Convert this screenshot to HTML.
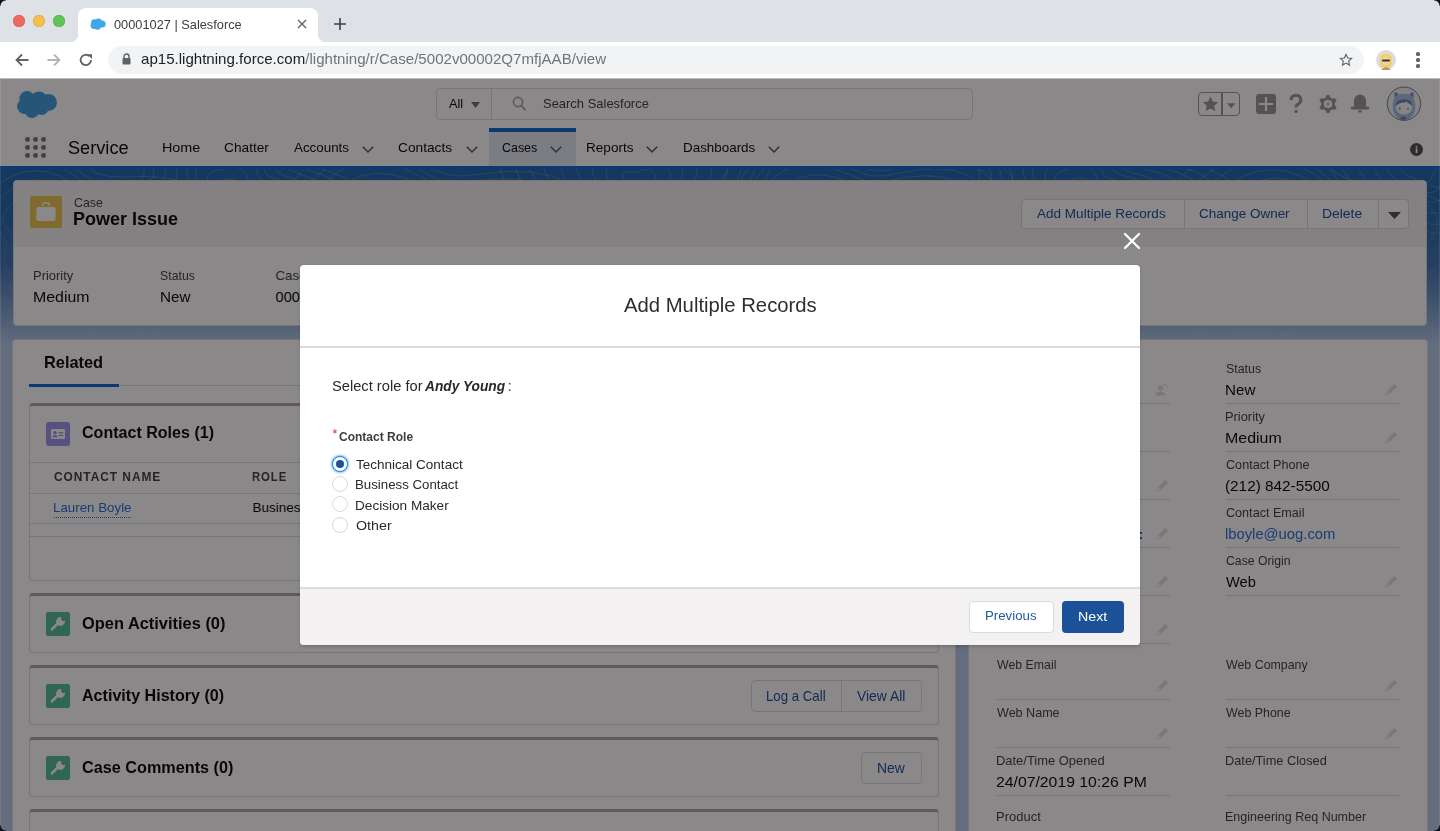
<!DOCTYPE html>
<html><head><meta charset="utf-8"><style>
*{box-sizing:border-box;margin:0;padding:0}
html,body{width:1440px;height:831px;overflow:hidden;background:#fff;font-family:"Liberation Sans",sans-serif;color:#080707}
.t{position:absolute;white-space:nowrap;line-height:1}
.r{position:absolute}
svg{position:absolute;overflow:visible}
</style></head><body>
<div class="r" style="left:0px;top:0px;width:1440px;height:42px;background:#dee1e6"></div>
<div class="r" style="left:0px;top:42px;width:1440px;height:36px;background:#fff"></div>
<div class="r" style="left:13px;top:15px;width:12px;height:12px;border-radius:50%;background:#ed6a5e;box-shadow:inset 0 0 0 0.5px #d5554b"></div>
<div class="r" style="left:33px;top:15px;width:12px;height:12px;border-radius:50%;background:#f5bf4f;box-shadow:inset 0 0 0 0.5px #d9a23a"></div>
<div class="r" style="left:53px;top:15px;width:12px;height:12px;border-radius:50%;background:#61c554;box-shadow:inset 0 0 0 0.5px #50a843"></div>
<div class="r" style="left:78px;top:8px;width:240px;height:34px;background:#fff;border-radius:8px 8px 0 0"></div>
<div class="r" style="left:70px;top:34px;width:8px;height:8px;background:radial-gradient(circle at 0 0,#dee1e6 8px,#fff 8.5px)"></div>
<div class="r" style="left:318px;top:34px;width:8px;height:8px;background:radial-gradient(circle at 100% 0,#dee1e6 8px,#fff 8.5px)"></div>
<svg style="left:90px;top:18px" width="16" height="12" viewBox="0 0 16 12"><g fill="#3fa6ea"><circle cx="4.5" cy="4.5" r="3.3"/><circle cx="8.5" cy="4" r="3.5"/><circle cx="12" cy="6" r="3.6"/><circle cx="4" cy="7.5" r="3.4"/><circle cx="7.5" cy="8.5" r="3.3"/></g></svg>
<div class="t" style="left:113.79px;top:17.91px;font-size:13.2px;color:#3c4043;transform:scaleX(0.9691);transform-origin:0 0;">00001027 | Salesforce</div>
<svg style="left:297px;top:19px" width="10" height="10" viewBox="0 0 10 10"><path d="M1 1L9 9M9 1L1 9" stroke="#5f6368" stroke-width="1.4"/></svg>
<svg style="left:334px;top:18px" width="12" height="12" viewBox="0 0 12 12"><path d="M6 0V12M0 6H12" stroke="#3c4043" stroke-width="1.6"/></svg>
<svg style="left:15px;top:53px" width="14" height="14" viewBox="0 0 14 14"><path d="M13.5 7H1.5M7 1.5L1.5 7L7 12.5" fill="none" stroke="#5f6368" stroke-width="1.8"/></svg>
<svg style="left:47px;top:53px" width="14" height="14" viewBox="0 0 14 14"><path d="M0.5 7H12.5M7 1.5L12.5 7L7 12.5" fill="none" stroke="#b4b6b9" stroke-width="1.8"/></svg>
<svg style="left:79px;top:53px" width="14" height="14" viewBox="0 0 14 14"><path d="M12 7A5.2 5.2 0 1 1 10.4 3.2" fill="none" stroke="#5f6368" stroke-width="1.8"/><path d="M8.2 1.2H13V6Z" fill="#5f6368"/></svg>
<div class="r" style="left:108px;top:46px;width:1256px;height:28px;background:#f1f3f4;border-radius:14px"></div>
<svg style="left:122px;top:53px" width="9" height="12" viewBox="0 0 9 12"><path d="M2 5V3.5A2.5 2.5 0 0 1 7 3.5V5" fill="none" stroke="#5f6368" stroke-width="1.4"/><rect x="0.5" y="5" width="8" height="6.5" rx="1" fill="#5f6368"/></svg>
<div class="t" style="left:141.40px;top:51.99px;font-size:14.6px;color:#202124;transform:scaleX(1.0329);transform-origin:0 0;">ap15.lightning.force.com<span style="color:#70757a">/lightning/r/Case/5002v00002Q7mfjAAB/view</span></div>
<svg style="left:1339px;top:53px" width="14" height="14" viewBox="0 0 24 24"><path d="M12 2.5l2.9 6.1 6.6.8-4.9 4.6 1.3 6.6L12 17.3l-5.9 3.3 1.3-6.6-4.9-4.6 6.6-.8z" fill="none" stroke="#5f6368" stroke-width="2"/></svg>
<div class="r" style="left:1376px;top:50px;width:20px;height:20px;border-radius:50%;background:#dcdcdc"></div>
<svg style="left:1376px;top:50px" width="20" height="20" viewBox="0 0 20 20"><path d="M4 12Q3 4 10 3.5Q17 4 16 12L15 17H5Z" fill="#f0d060"/><ellipse cx="10" cy="11" rx="4" ry="4.6" fill="#f0d2b0"/><rect x="6" y="9.5" width="8" height="2" rx="1" fill="#333"/><path d="M5 20Q10 14 15 20Z" fill="#c98f6a"/></svg>
<div class="r" style="left:1416.4px;top:52.4px;width:3.2px;height:3.2px;border-radius:50%;background:#5f6368"></div>
<div class="r" style="left:1416.4px;top:58.4px;width:3.2px;height:3.2px;border-radius:50%;background:#5f6368"></div>
<div class="r" style="left:1416.4px;top:64.4px;width:3.2px;height:3.2px;border-radius:50%;background:#5f6368"></div>
<div class="r" style="left:0;top:78px;width:1440px;height:753px;overflow:hidden;background:#b4cbe8">
<div class="r" style="left:0px;top:88px;width:1440px;height:665px;background:linear-gradient(#2266ac 0px,#2266ac 40px,#3f74b4 100px,#86a8d3 150px,#b4cbe8 178px,#b4cbe8 665px)"></div>
<svg style="left:0;top:91px" width="1440" height="200" viewBox="0 0 1440 200"><defs><linearGradient id="bf" x1="0" y1="0" x2="0" y2="1"><stop offset="0" stop-color="#fff" stop-opacity="1"/><stop offset="0.85" stop-color="#fff" stop-opacity="0.3"/><stop offset="1" stop-color="#fff" stop-opacity="0"/></linearGradient><mask id="bm"><rect width="1440" height="200" fill="url(#bf)"/></mask></defs><g mask="url(#bm)" fill="none" stroke="#ffffff" stroke-opacity="0.18" stroke-width="1"><path d="M76.6,60.0L75.5,61.3L74.4,62.4L73.3,63.4L72.3,64.4L71.1,65.2L69.6,65.9L68.0,66.4L66.4,66.8L64.8,67.1L63.3,67.6L61.8,68.3L60.0,69.2L57.8,70.1L55.4,70.6L52.9,70.6L50.7,69.9L49.3,68.6L48.7,67.0L48.7,65.3L48.9,63.9L49.0,62.8L48.6,61.9L47.8,61.0L46.8,60.0L46.0,58.9L45.6,57.6L45.8,56.4L46.5,55.2L47.4,54.1L48.6,53.0L49.9,51.9L51.5,50.9L53.4,50.2L55.6,49.9L57.9,50.2L60.0,50.9L61.7,51.9L63.1,52.9L64.3,53.7L65.6,54.0L67.4,54.0L69.7,54.0L72.3,54.2L74.7,54.8L76.5,55.8L77.4,57.1L77.3,58.6L76.6,60.0Z M94.7,60.0L92.4,62.6L90.1,65.0L87.9,67.1L85.7,69.1L83.1,70.9L80.1,72.4L76.8,73.5L73.3,74.2L70.0,74.9L66.9,75.9L63.7,77.4L60.0,79.3L55.5,81.1L50.3,82.2L45.1,82.2L40.6,80.7L37.6,78.0L36.3,74.6L36.3,71.2L36.9,68.2L37.0,65.9L36.2,63.9L34.5,62.1L32.4,60.0L30.7,57.6L30.0,55.0L30.4,52.4L31.7,50.0L33.7,47.6L36.1,45.3L38.9,43.1L42.2,41.0L46.2,39.5L50.8,38.9L55.6,39.4L60.0,41.0L63.6,43.1L66.4,45.2L68.9,46.8L71.7,47.5L75.5,47.6L80.4,47.5L85.8,47.8L90.8,49.1L94.5,51.2L96.3,54.0L96.2,57.1L94.7,60.0Z M108.1,60.0L105.0,63.6L101.8,66.9L98.7,69.9L95.6,72.6L92.1,75.2L87.9,77.2L83.3,78.7L78.5,79.7L73.9,80.7L69.6,82.1L65.2,84.2L60.0,86.7L53.7,89.3L46.6,90.9L39.3,90.8L33.1,88.7L29.0,84.9L27.2,80.2L27.2,75.5L27.9,71.4L28.1,68.1L27.0,65.4L24.6,62.9L21.7,60.0L19.4,56.7L18.3,53.1L18.9,49.5L20.8,46.1L23.6,42.8L26.9,39.6L30.7,36.5L35.3,33.7L40.9,31.6L47.3,30.7L53.9,31.5L60.0,33.6L65.0,36.6L68.9,39.5L72.4,41.6L76.3,42.6L81.5,42.7L88.2,42.6L95.7,43.1L102.7,44.8L107.9,47.8L110.4,51.7L110.2,55.9L108.1,60.0Z M126.0,60.0L121.8,65.0L117.4,69.5L113.1,73.5L108.9,77.4L104.1,80.8L98.4,83.6L92.0,85.6L85.4,87.1L79.1,88.4L73.2,90.3L67.1,93.2L60.0,96.7L51.4,100.2L41.6,102.4L31.6,102.2L23.1,99.4L17.4,94.2L14.9,87.7L15.0,81.3L15.9,75.7L16.2,71.2L14.6,67.5L11.4,63.9L7.4,60.0L4.2,55.5L2.8,50.6L3.6,45.6L6.2,40.9L10.0,36.4L14.5,32.0L19.8,27.7L26.1,23.9L33.7,21.0L42.5,19.8L51.6,20.8L60.0,23.8L66.9,27.8L72.2,31.9L77.0,34.8L82.4,36.2L89.6,36.3L98.8,36.1L109.0,36.8L118.6,39.2L125.7,43.2L129.2,48.6L128.9,54.4L126.0,60.0Z M141.2,60.0L136.0,66.2L130.5,71.6L125.4,76.7L120.1,81.4L114.2,85.6L107.2,89.0L99.3,91.5L91.2,93.3L83.5,94.9L76.2,97.3L68.7,100.8L60.0,105.2L49.4,109.4L37.3,112.1L25.0,111.9L14.6,108.4L7.6,102.1L4.5,94.1L4.6,86.2L5.8,79.3L6.1,73.7L4.2,69.2L0.2,64.8L-4.7,60.0L-8.6,54.4L-10.3,48.4L-9.4,42.3L-6.2,36.5L-1.5,31.0L4.1,25.6L10.5,20.3L18.3,15.5L27.7,12.0L38.5,10.6L49.7,11.8L60.0,15.4L68.5,20.4L75.1,25.4L80.9,29.0L87.5,30.7L96.4,30.8L107.7,30.7L120.3,31.5L132.1,34.4L140.8,39.4L145.1,46.0L144.8,53.1L141.2,60.0Z M155.8,60.0L149.6,67.3L143.2,73.7L137.1,79.7L130.9,85.2L123.9,90.2L115.7,94.3L106.4,97.2L96.8,99.3L87.7,101.2L79.2,104.0L70.3,108.1L60.0,113.3L47.5,118.3L33.2,121.5L18.8,121.3L6.4,117.1L-1.9,109.6L-5.4,100.3L-5.4,90.9L-3.9,82.7L-3.6,76.2L-5.8,70.9L-10.6,65.7L-16.3,60.0L-20.9,53.4L-23.0,46.3L-21.9,39.1L-18.1,32.3L-12.6,25.7L-6.0,19.4L1.6,13.2L10.8,7.6L21.9,3.4L34.6,1.7L47.8,3.1L60.0,7.4L70.0,13.3L77.8,19.2L84.6,23.4L92.4,25.4L102.9,25.6L116.2,25.4L131.1,26.4L145.1,29.8L155.4,35.7L160.4,43.5L160.0,51.9L155.8,60.0Z M173.7,60.0L166.4,68.6L158.7,76.3L151.5,83.3L144.2,89.9L135.9,95.8L126.1,100.6L115.0,104.1L103.7,106.6L92.9,108.9L82.7,112.2L72.2,117.1L60.0,123.2L45.2,129.2L28.2,132.9L11.1,132.7L-3.6,127.8L-13.4,118.9L-17.6,107.8L-17.6,96.6L-15.9,87.0L-15.5,79.2L-18.1,72.9L-23.7,66.8L-30.5,60.0L-36.0,52.2L-38.5,43.8L-37.1,35.2L-32.6,27.1L-26.1,19.3L-18.3,11.8L-9.3,4.5L1.6,-2.2L14.8,-7.2L29.9,-9.2L45.6,-7.5L60.0,-2.4L71.8,4.6L81.1,11.6L89.2,16.6L98.5,19.0L110.9,19.2L126.7,18.9L144.4,20.1L160.9,24.1L173.1,31.2L179.1,40.4L178.7,50.4L173.7,60.0Z M187.5,60.0L179.4,69.7L170.8,78.3L162.7,86.2L154.4,93.6L145.1,100.2L134.1,105.6L121.7,109.5L109.0,112.3L96.9,114.9L85.5,118.6L73.7,124.1L60.0,131.0L43.4,137.6L24.4,141.8L5.1,141.6L-11.3,136.0L-22.4,126.1L-27.1,113.6L-27.0,101.1L-25.1,90.2L-24.7,81.6L-27.7,74.5L-33.9,67.6L-41.5,60.0L-47.8,51.3L-50.5,41.8L-49.0,32.2L-44.0,23.1L-36.6,14.4L-27.9,5.9L-17.7,-2.3L-5.5,-9.8L9.3,-15.4L26.2,-17.6L43.8,-15.7L60.0,-10.0L73.3,-2.1L83.7,5.7L92.8,11.3L103.2,14.0L117.1,14.2L134.9,13.9L154.7,15.3L173.3,19.8L187.0,27.6L193.6,38.0L193.2,49.2L187.5,60.0Z M205.2,60.0L195.9,71.0L186.1,80.8L176.9,89.8L167.5,98.2L156.9,105.8L144.4,111.9L130.3,116.4L115.8,119.5L102.0,122.5L89.0,126.7L75.6,132.9L60.0,140.8L41.1,148.4L19.4,153.2L-2.5,152.9L-21.2,146.6L-33.8,135.2L-39.2,121.0L-39.1,106.8L-36.9,94.4L-36.4,84.6L-39.8,76.5L-46.9,68.7L-55.6,60.0L-62.7,50.1L-65.8,39.3L-64.1,28.4L-58.3,18.0L-50.0,8.1L-40.0,-1.6L-28.5,-11.0L-14.6,-19.5L2.2,-25.8L21.5,-28.3L41.6,-26.2L60.0,-19.7L75.1,-10.7L86.9,-1.9L97.3,4.6L109.2,7.6L125.0,7.9L145.2,7.5L167.8,9.1L188.9,14.2L204.5,23.2L212.1,34.9L211.6,47.7L205.2,60.0Z M246.6,20.0L247.6,21.4L247.5,22.9L246.3,24.2L244.5,25.1L242.3,25.8L240.2,26.3L238.3,26.7L236.7,27.1L235.1,27.5L233.4,27.9L231.7,28.0L230.0,28.0L228.3,27.9L226.6,27.8L224.8,27.7L222.7,27.8L220.3,27.8L217.9,27.5L215.7,26.8L214.2,25.6L213.8,24.1L214.4,22.6L215.8,21.2L217.3,20.0L218.5,19.1L219.2,18.2L219.3,17.3L219.1,16.1L219.0,14.8L219.5,13.5L220.5,12.4L222.0,11.5L223.9,10.9L225.8,10.4L227.9,10.2L230.0,10.0L232.1,10.0L234.2,10.3L236.0,11.1L237.3,12.2L238.2,13.5L238.6,14.7L238.9,15.8L239.6,16.6L240.9,17.2L242.7,17.9L244.8,18.8L246.6,20.0Z M264.3,20.0L266.3,22.9L266.1,26.0L263.7,28.6L259.9,30.6L255.4,32.0L251.1,33.0L247.2,33.8L243.8,34.7L240.5,35.5L237.1,36.2L233.5,36.6L230.0,36.6L226.5,36.3L223.0,36.0L219.2,36.0L214.9,36.1L210.0,36.0L204.9,35.4L200.4,34.0L197.4,31.6L196.6,28.5L197.8,25.3L200.6,22.4L203.8,20.0L206.3,18.1L207.6,16.3L207.8,14.3L207.5,12.0L207.4,9.3L208.3,6.6L210.4,4.3L213.5,2.4L217.3,1.1L221.4,0.3L225.7,-0.3L230.0,-0.7L234.4,-0.6L238.7,0.1L242.4,1.6L245.2,3.8L246.8,6.5L247.7,9.1L248.4,11.3L249.8,12.9L252.5,14.3L256.3,15.7L260.6,17.5L264.3,20.0Z M282.2,20.0L285.3,24.5L285.0,29.1L281.4,33.1L275.5,36.2L268.7,38.3L262.1,39.8L256.2,41.0L251.0,42.4L246.0,43.7L240.8,44.8L235.4,45.3L230.0,45.2L224.7,44.8L219.4,44.5L213.6,44.4L207.0,44.5L199.5,44.4L191.8,43.5L184.9,41.3L180.4,37.6L179.0,33.0L181.0,28.1L185.2,23.6L190.0,20.0L193.9,17.1L195.9,14.4L196.2,11.4L195.6,7.8L195.5,3.7L196.9,-0.4L200.1,-4.0L204.9,-6.8L210.7,-8.7L216.9,-10.1L223.4,-11.0L230.0,-11.5L236.7,-11.5L243.2,-10.4L248.9,-8.1L253.1,-4.7L255.7,-0.6L257.0,3.4L258.1,6.7L260.3,9.3L264.3,11.3L270.1,13.4L276.6,16.2L282.2,20.0Z M295.3,20.0L299.2,25.6L298.8,31.3L294.3,36.4L286.9,40.2L278.4,42.9L270.2,44.7L262.8,46.3L256.3,48.0L250.0,49.6L243.5,51.0L236.8,51.6L230.0,51.6L223.4,51.1L216.7,50.6L209.5,50.5L201.2,50.7L191.9,50.6L182.2,49.4L173.6,46.6L167.9,42.1L166.3,36.2L168.7,30.1L173.9,24.5L180.0,20.0L184.8,16.3L187.4,13.0L187.7,9.2L187.0,4.7L186.9,-0.4L188.6,-5.5L192.6,-10.0L198.6,-13.5L205.8,-15.9L213.6,-17.6L221.7,-18.8L230.0,-19.4L238.4,-19.3L246.5,-18.0L253.6,-15.1L258.9,-10.8L262.1,-5.8L263.8,-0.8L265.1,3.4L267.8,6.6L272.8,9.1L280.1,11.7L288.3,15.3L295.3,20.0Z M312.0,20.0L316.8,27.0L316.3,34.2L310.7,40.6L301.4,45.4L290.7,48.7L280.4,51.0L271.2,53.0L262.9,55.1L255.0,57.2L246.9,58.9L238.5,59.7L230.0,59.6L221.7,59.0L213.3,58.4L204.3,58.2L193.9,58.5L182.2,58.3L170.0,56.9L159.3,53.4L152.1,47.7L150.0,40.4L153.1,32.7L159.6,25.7L167.2,20.0L173.3,15.4L176.5,11.2L177.0,6.5L176.1,0.8L175.9,-5.5L178.0,-12.0L183.1,-17.6L190.6,-22.0L199.6,-25.1L209.5,-27.2L219.6,-28.6L230.0,-29.5L240.6,-29.3L250.8,-27.7L259.7,-24.1L266.3,-18.7L270.3,-12.3L272.4,-6.1L274.1,-0.8L277.5,3.1L283.8,6.3L292.9,9.6L303.1,14.1L312.0,20.0Z M330.0,20.0L335.9,28.6L335.3,37.4L328.4,45.1L317.1,50.9L304.1,55.0L291.4,57.8L280.2,60.3L270.2,62.8L260.5,65.3L250.6,67.4L240.4,68.4L230.0,68.3L219.8,67.5L209.6,66.8L198.6,66.6L186.0,66.9L171.7,66.8L156.8,65.0L143.8,60.7L135.0,53.7L132.5,44.9L136.2,35.5L144.2,27.0L153.5,20.0L160.9,14.4L164.8,9.2L165.3,3.5L164.2,-3.4L164.0,-11.1L166.6,-19.0L172.8,-25.9L181.9,-31.3L193.0,-35.0L204.9,-37.5L217.3,-39.3L230.0,-40.3L242.9,-40.2L255.3,-38.1L266.2,-33.7L274.2,-27.2L279.1,-19.4L281.6,-11.8L283.8,-5.4L287.9,-0.6L295.5,3.3L306.7,7.4L319.2,12.8L330.0,20.0Z M347.6,20.0L354.6,30.1L353.8,40.4L345.7,49.5L332.4,56.4L317.1,61.1L302.3,64.5L289.0,67.4L277.2,70.3L265.9,73.3L254.3,75.7L242.2,76.9L230.0,76.8L218.0,75.9L206.0,75.0L193.1,74.8L178.2,75.2L161.4,75.0L144.0,72.9L128.6,67.9L118.3,59.7L115.3,49.2L119.6,38.2L129.1,28.2L140.0,20.0L148.7,13.4L153.3,7.4L153.9,0.6L152.7,-7.5L152.4,-16.6L155.5,-25.9L162.7,-34.0L173.4,-40.3L186.5,-44.7L200.5,-47.7L215.1,-49.7L230.0,-51.0L245.1,-50.8L259.8,-48.4L272.5,-43.2L282.0,-35.5L287.8,-26.4L290.7,-17.4L293.2,-9.9L298.1,-4.2L307.1,0.3L320.2,5.1L334.9,11.5L347.6,20.0Z M362.1,20.0L370.0,31.3L369.2,42.9L360.0,53.1L345.1,60.9L327.9,66.2L311.2,70.0L296.4,73.2L283.1,76.6L270.3,79.9L257.3,82.6L243.7,84.0L230.0,83.8L216.6,82.8L203.1,81.8L188.5,81.6L171.8,82.0L152.9,81.8L133.3,79.5L116.0,73.8L104.5,64.6L101.1,52.9L106.0,40.5L116.6,29.2L128.8,20.0L138.7,12.6L143.8,5.8L144.5,-1.8L143.1,-10.9L142.8,-21.2L146.2,-31.5L154.3,-40.7L166.4,-47.8L181.1,-52.7L196.9,-56.0L213.2,-58.4L230.0,-59.7L247.0,-59.5L263.5,-56.8L277.8,-51.0L288.5,-42.3L295.0,-32.1L298.3,-22.0L301.1,-13.6L306.5,-7.2L316.6,-2.1L331.3,3.3L347.9,10.4L362.1,20.0Z M438.9,70.0L438.0,71.5L437.1,72.8L436.1,74.1L434.8,75.2L433.1,76.2L431.2,76.9L429.3,77.4L427.5,78.0L426.0,78.9L424.3,80.0L422.4,81.3L420.0,82.6L417.1,83.5L414.1,83.5L411.4,82.7L409.5,81.2L408.4,79.3L408.0,77.4L407.8,75.7L407.4,74.5L406.5,73.4L405.2,72.4L403.8,71.3L402.7,70.0L402.1,68.6L402.1,67.1L402.6,65.6L403.4,64.1L404.4,62.6L405.6,61.1L407.2,59.8L409.4,58.7L412.1,58.3L415.0,58.5L417.7,59.3L420.0,60.4L421.8,61.4L423.5,62.0L425.3,62.1L427.6,61.9L430.5,61.6L433.6,61.6L436.6,62.2L438.8,63.3L440.0,64.9L440.2,66.7L439.7,68.4L438.9,70.0Z M450.1,70.0L448.6,72.3L447.2,74.5L445.6,76.5L443.5,78.3L440.8,79.8L437.8,80.9L434.8,81.8L432.0,82.8L429.5,84.1L426.9,85.9L423.9,88.0L420.0,90.1L415.4,91.4L410.6,91.5L406.4,90.2L403.3,87.8L401.6,84.8L400.9,81.7L400.6,79.1L400.0,77.1L398.6,75.5L396.5,73.9L394.3,72.1L392.5,70.0L391.6,67.7L391.6,65.3L392.4,63.0L393.6,60.6L395.1,58.3L397.1,55.9L399.7,53.7L403.2,52.1L407.4,51.3L412.0,51.7L416.3,52.9L420.0,54.7L422.9,56.3L425.5,57.3L428.4,57.5L432.1,57.1L436.6,56.7L441.6,56.7L446.3,57.6L449.9,59.4L451.8,61.9L452.1,64.7L451.4,67.5L450.1,70.0Z M468.3,70.0L466.0,73.7L463.7,77.2L461.1,80.5L457.7,83.4L453.4,85.8L448.6,87.6L443.7,89.0L439.3,90.5L435.2,92.6L431.1,95.5L426.2,99.0L420.0,102.3L412.6,104.4L404.9,104.6L398.1,102.5L393.2,98.6L390.4,93.7L389.4,88.8L388.9,84.7L387.9,81.4L385.6,78.8L382.3,76.2L378.7,73.3L375.8,70.0L374.3,66.3L374.4,62.5L375.6,58.7L377.6,54.9L380.0,51.1L383.2,47.3L387.4,43.9L393.0,41.2L399.8,40.0L407.2,40.5L414.1,42.6L420.0,45.4L424.7,48.0L428.9,49.6L433.5,49.9L439.4,49.3L446.7,48.6L454.8,48.6L462.3,50.0L468.0,53.0L471.1,57.0L471.6,61.5L470.4,65.9L468.3,70.0Z M480.9,70.0L478.1,74.7L475.1,79.1L471.8,83.2L467.5,86.9L462.1,89.9L456.0,92.2L449.9,94.0L444.3,95.9L439.2,98.5L434.0,102.2L427.8,106.6L420.0,110.7L410.7,113.4L401.0,113.6L392.4,111.0L386.1,106.1L382.7,99.9L381.4,93.8L380.8,88.5L379.5,84.4L376.6,81.1L372.4,77.8L367.9,74.2L364.3,70.0L362.4,65.3L362.5,60.5L364.0,55.7L366.5,51.0L369.6,46.2L373.6,41.4L378.9,37.0L386.0,33.7L394.5,32.2L403.8,32.8L412.6,35.4L420.0,38.9L425.9,42.2L431.2,44.3L437.0,44.7L444.5,43.9L453.7,43.0L463.9,43.0L473.3,44.8L480.5,48.5L484.4,53.6L485.1,59.3L483.5,64.9L480.9,70.0Z M495.3,70.0L491.7,75.8L488.1,81.2L484.0,86.3L478.7,90.9L472.1,94.6L464.5,97.4L456.9,99.6L450.0,102.0L443.7,105.2L437.3,109.8L429.7,115.2L420.0,120.3L408.5,123.6L396.5,123.9L385.9,120.7L378.2,114.6L373.9,107.0L372.3,99.4L371.6,92.9L369.9,87.8L366.4,83.7L361.2,79.7L355.6,75.2L351.1,70.0L348.8,64.2L348.9,58.3L350.8,52.4L353.9,46.5L357.7,40.6L362.6,34.7L369.2,29.3L377.9,25.2L388.6,23.3L400.0,24.1L410.8,27.2L420.0,31.6L427.3,35.7L433.8,38.2L441.0,38.7L450.2,37.8L461.6,36.6L474.2,36.7L485.9,38.9L494.7,43.4L499.6,49.7L500.4,56.7L498.5,63.6L495.3,70.0Z M510.1,70.0L505.8,77.0L501.5,83.4L496.6,89.5L490.3,95.0L482.3,99.4L473.3,102.8L464.2,105.5L455.9,108.3L448.4,112.2L440.7,117.6L431.6,124.1L420.0,130.2L406.3,134.2L391.9,134.5L379.2,130.7L369.9,123.4L364.8,114.2L362.9,105.2L362.0,97.4L360.1,91.3L355.8,86.4L349.6,81.6L342.9,76.2L337.6,70.0L334.8,63.1L334.9,56.0L337.2,48.9L340.9,41.9L345.5,34.8L351.3,27.7L359.2,21.2L369.6,16.3L382.4,14.1L396.1,15.0L409.0,18.8L420.0,24.0L428.8,28.9L436.6,32.0L445.2,32.6L456.2,31.4L469.9,30.0L484.9,30.1L498.9,32.8L509.5,38.2L515.2,45.7L516.3,54.1L514.0,62.4L510.1,70.0Z M525.8,70.0L520.8,78.2L515.8,85.8L510.0,92.9L502.5,99.3L493.2,104.6L482.6,108.5L471.9,111.6L462.2,114.9L453.3,119.5L444.3,125.9L433.6,133.5L420.0,140.7L403.9,145.4L387.0,145.8L372.0,141.2L361.2,132.7L355.2,122.0L352.9,111.3L351.9,102.2L349.6,95.0L344.7,89.2L337.4,83.6L329.5,77.3L323.2,70.0L319.9,61.9L320.1,53.5L322.8,45.2L327.1,37.0L332.5,28.7L339.3,20.4L348.6,12.7L360.9,7.0L375.8,4.3L391.9,5.5L407.1,9.9L420.0,16.0L430.3,21.8L439.5,25.3L449.6,26.1L462.5,24.7L478.5,23.0L496.2,23.1L512.6,26.3L525.1,32.7L531.8,41.5L533.1,51.4L530.4,61.1L525.8,70.0Z M542.8,70.0L537.0,79.5L531.2,88.3L524.4,96.6L515.8,104.0L505.0,110.1L492.7,114.7L480.3,118.3L468.9,122.2L458.7,127.5L448.2,134.9L435.8,143.7L420.0,152.1L401.3,157.5L381.7,157.9L364.3,152.7L351.8,142.7L344.8,130.3L342.1,117.9L340.9,107.3L338.3,99.0L332.5,92.3L324.1,85.8L315.0,78.5L307.6,70.0L303.9,60.6L304.0,50.9L307.2,41.2L312.1,31.7L318.4,22.0L326.4,12.4L337.1,3.5L351.4,-3.2L368.7,-6.2L387.4,-4.9L405.1,0.2L420.0,7.3L432.0,14.0L442.6,18.1L454.3,19.0L469.3,17.4L488.0,15.5L508.4,15.6L527.5,19.2L541.9,26.7L549.8,36.9L551.2,48.4L548.1,59.6L542.8,70.0Z M555.1,70.0L548.8,80.4L542.3,90.2L534.9,99.3L525.4,107.5L513.5,114.2L500.0,119.2L486.3,123.2L473.9,127.4L462.6,133.3L451.1,141.4L437.4,151.1L420.0,160.3L399.4,166.3L377.9,166.8L358.7,161.0L344.9,150.1L337.2,136.4L334.3,122.7L333.0,111.1L330.1,102.0L323.8,94.5L314.5,87.4L304.4,79.4L296.3,70.0L292.2,59.6L292.3,49.0L295.8,38.3L301.3,27.8L308.2,17.2L317.0,6.6L328.8,-3.2L344.5,-10.5L363.5,-13.9L384.1,-12.5L403.6,-6.8L420.0,1.0L433.2,8.4L444.8,12.9L457.8,13.9L474.3,12.1L494.8,10.0L517.3,10.1L538.3,14.1L554.2,22.3L562.9,33.6L564.4,46.2L561.0,58.6L555.1,70.0Z M571.7,70.0L564.6,81.7L557.3,92.6L549.0,102.9L538.4,112.1L525.0,119.6L509.8,125.2L494.5,129.7L480.5,134.5L467.8,141.0L454.9,150.1L439.5,161.0L420.0,171.4L396.9,178.1L372.7,178.6L351.2,172.2L335.7,159.9L327.1,144.5L323.8,129.2L322.3,116.1L319.1,105.9L312.0,97.5L301.5,89.5L290.2,80.5L281.2,70.0L276.5,58.4L276.7,46.4L280.6,34.5L286.8,22.7L294.5,10.7L304.3,-1.2L317.6,-12.1L335.2,-20.4L356.6,-24.2L379.7,-22.6L401.6,-16.2L420.0,-7.4L434.8,0.8L447.9,5.9L462.4,7.0L481.0,5.0L504.0,2.7L529.2,2.8L552.8,7.3L570.7,16.5L580.4,29.1L582.1,43.3L578.3,57.2L571.7,70.0Z M655.2,10.0L654.2,11.2L653.0,12.1L651.8,13.0L650.9,13.9L650.4,14.9L650.2,16.3L649.9,17.9L649.0,19.6L647.4,21.0L645.1,21.8L642.5,21.8L640.0,21.2L637.8,20.1L636.1,18.8L634.8,17.8L633.4,17.0L632.0,16.4L630.4,15.9L628.7,15.3L627.2,14.5L626.0,13.6L625.1,12.5L624.4,11.3L623.7,10.0L623.0,8.6L622.6,7.1L622.7,5.6L623.6,4.2L625.5,3.1L627.9,2.6L630.7,2.5L633.2,2.8L635.3,3.1L637.0,3.1L638.4,2.6L640.0,1.8L642.0,0.9L644.3,0.1L646.8,-0.1L649.2,0.2L651.2,1.1L652.6,2.2L653.7,3.5L654.5,4.8L655.1,6.1L655.6,7.4L655.6,8.7L655.2,10.0Z M669.6,10.0L667.8,12.3L665.4,14.2L663.0,15.9L661.3,17.6L660.4,19.6L659.9,22.3L659.2,25.4L657.5,28.7L654.4,31.4L650.0,33.0L644.9,33.1L640.0,31.8L635.8,29.7L632.5,27.3L629.8,25.2L627.2,23.6L624.4,22.6L621.2,21.6L618.0,20.4L615.1,18.9L612.7,16.9L611.0,14.8L609.5,12.5L608.2,10.0L606.9,7.3L606.0,4.4L606.3,1.4L608.1,-1.3L611.6,-3.4L616.5,-4.5L621.8,-4.6L626.8,-4.1L630.9,-3.5L634.1,-3.5L636.9,-4.4L640.0,-6.0L643.8,-7.9L648.4,-9.3L653.3,-9.8L657.9,-9.1L661.8,-7.5L664.6,-5.2L666.7,-2.6L668.3,-0.1L669.5,2.5L670.4,5.0L670.5,7.5L669.6,10.0Z M681.6,10.0L679.0,13.2L675.7,15.9L672.4,18.2L669.9,20.6L668.6,23.5L668.0,27.2L667.0,31.7L664.6,36.2L660.2,40.1L654.1,42.3L646.9,42.4L640.0,40.6L634.1,37.6L629.5,34.2L625.7,31.3L622.0,29.2L618.0,27.6L613.6,26.3L609.1,24.6L605.0,22.4L601.7,19.8L599.3,16.7L597.2,13.5L595.3,10.0L593.5,6.2L592.3,2.1L592.6,-2.1L595.2,-5.9L600.2,-8.8L607.0,-10.3L614.5,-10.5L621.5,-9.7L627.2,-9.0L631.7,-9.0L635.7,-10.2L640.0,-12.5L645.4,-15.1L651.8,-17.1L658.7,-17.8L665.2,-16.8L670.6,-14.5L674.6,-11.3L677.5,-7.7L679.7,-4.1L681.5,-0.6L682.6,3.0L682.8,6.5L681.6,10.0Z M695.4,10.0L691.9,14.2L687.5,17.8L683.1,21.0L679.8,24.2L678.1,28.0L677.2,32.9L675.9,38.8L672.8,44.9L666.9,50.0L658.7,53.0L649.2,53.2L640.0,50.8L632.1,46.7L626.0,42.3L620.9,38.4L616.1,35.5L610.8,33.5L604.8,31.6L598.8,29.4L593.4,26.6L589.1,23.0L585.8,18.9L583.1,14.6L580.5,10.0L578.1,5.0L576.5,-0.5L576.9,-6.1L580.4,-11.2L587.0,-15.0L596.0,-17.1L606.0,-17.3L615.3,-16.3L623.0,-15.3L629.0,-15.3L634.2,-16.9L640.0,-19.9L647.1,-23.4L655.7,-26.0L664.9,-26.9L673.5,-25.7L680.7,-22.6L686.1,-18.3L689.9,-13.6L692.9,-8.8L695.2,-4.1L696.7,0.6L697.0,5.4L695.4,10.0Z M709.7,10.0L705.4,15.3L699.7,19.9L694.2,23.8L690.1,27.8L688.0,32.6L686.9,38.9L685.2,46.3L681.3,54.0L673.9,60.4L663.6,64.1L651.6,64.3L640.0,61.3L630.1,56.2L622.3,50.6L616.0,45.7L609.9,42.1L603.2,39.5L595.7,37.2L588.1,34.5L581.3,30.8L575.9,26.3L571.8,21.3L568.3,15.8L565.1,10.0L562.0,3.7L560.1,-3.2L560.6,-10.2L564.9,-16.7L573.2,-21.5L584.6,-24.1L597.2,-24.3L609.0,-23.1L618.6,-21.8L626.1,-21.8L632.7,-23.9L640.0,-27.7L649.0,-32.0L659.7,-35.4L671.3,-36.5L682.2,-35.0L691.2,-31.1L698.0,-25.7L702.9,-19.7L706.6,-13.7L709.5,-7.7L711.4,-1.8L711.7,4.2L709.7,10.0Z M725.2,10.0L720.0,16.5L713.1,22.1L706.3,26.9L701.3,31.8L698.7,37.7L697.4,45.3L695.4,54.4L690.5,63.8L681.5,71.7L668.8,76.2L654.2,76.5L640.0,72.8L627.9,66.6L618.4,59.7L610.6,53.7L603.2,49.3L595.0,46.1L585.8,43.3L576.6,40.0L568.2,35.5L561.6,30.0L556.5,23.8L552.3,17.1L548.3,10.0L544.6,2.3L542.2,-6.1L542.9,-14.8L548.1,-22.6L558.3,-28.6L572.3,-31.7L587.7,-32.0L602.0,-30.5L613.8,-28.9L623.0,-29.0L631.1,-31.5L640.0,-36.1L651.0,-41.4L664.2,-45.5L678.3,-46.9L691.6,-45.0L702.7,-40.3L710.9,-33.7L716.9,-26.3L721.4,-18.9L725.0,-11.7L727.4,-4.4L727.7,2.9L725.2,10.0Z M738.1,10.0L732.0,17.5L724.1,23.9L716.3,29.5L710.6,35.1L707.5,41.9L706.0,50.6L703.7,61.1L698.1,71.9L687.7,80.9L673.2,86.2L656.4,86.5L640.0,82.2L626.1,75.1L615.1,67.1L606.2,60.3L597.6,55.2L588.2,51.6L577.7,48.3L567.0,44.5L557.4,39.3L549.8,33.0L543.9,25.8L539.1,18.2L534.5,10.0L530.3,1.1L527.5,-8.6L528.3,-18.5L534.3,-27.6L546.0,-34.4L562.1,-38.0L579.8,-38.3L596.3,-36.6L609.9,-34.8L620.5,-34.8L629.8,-37.7L640.0,-43.0L652.6,-49.1L667.8,-53.8L684.1,-55.5L699.4,-53.3L712.1,-47.8L721.6,-40.2L728.5,-31.8L733.7,-23.3L737.8,-14.9L740.5,-6.6L740.9,1.8L738.1,10.0Z M751.4,10.0L744.6,18.5L735.5,25.8L726.7,32.1L720.2,38.5L716.7,46.2L715.0,56.1L712.4,68.0L706.0,80.3L694.3,90.6L677.7,96.5L658.6,96.9L640.0,92.1L624.2,83.9L611.7,74.9L601.6,67.1L591.8,61.3L581.1,57.2L569.2,53.6L557.1,49.2L546.2,43.3L537.5,36.1L530.9,28.0L525.4,19.3L520.2,10.0L515.3,-0.1L512.2,-11.1L513.1,-22.4L519.9,-32.7L533.2,-40.4L551.5,-44.5L571.6,-44.9L590.4,-42.9L605.8,-40.9L617.8,-40.9L628.4,-44.2L640.0,-50.2L654.4,-57.2L671.6,-62.5L690.1,-64.4L707.5,-61.9L721.9,-55.7L732.7,-47.1L740.5,-37.5L746.5,-27.8L751.1,-18.3L754.2,-8.8L754.7,0.7L751.4,10.0Z M766.2,10.0L758.5,19.6L748.2,27.8L738.2,35.0L730.8,42.3L726.9,51.0L724.9,62.3L722.0,75.7L714.7,89.7L701.5,101.3L682.7,108.0L661.1,108.4L640.0,103.0L622.1,93.8L608.0,83.6L596.5,74.7L585.4,68.1L573.3,63.5L559.8,59.4L546.1,54.4L533.7,47.8L523.9,39.6L516.4,30.4L510.2,20.5L504.3,10.0L498.7,-1.4L495.2,-13.9L496.2,-26.7L504.0,-38.3L519.0,-47.1L539.7,-51.7L562.5,-52.2L583.8,-49.9L601.2,-47.6L614.9,-47.7L626.9,-51.4L640.0,-58.2L656.3,-66.1L675.8,-72.2L696.7,-74.3L716.4,-71.5L732.8,-64.4L745.0,-54.6L753.9,-43.8L760.6,-32.8L765.9,-22.1L769.4,-11.3L769.9,-0.5L766.2,10.0Z M875.7,60.0L875.2,61.2L874.5,62.4L873.6,63.5L872.2,64.4L870.7,65.1L869.1,65.6L867.8,66.2L866.6,67.0L865.4,68.1L864.1,69.4L862.3,70.7L860.0,71.6L857.5,71.9L855.0,71.4L853.1,70.3L851.8,68.7L851.1,67.1L850.6,65.8L850.1,64.7L849.1,63.9L847.9,63.1L846.6,62.2L845.4,61.2L844.7,60.0L844.5,58.7L844.6,57.5L845.0,56.2L845.5,54.8L846.2,53.5L847.3,52.2L848.9,51.1L851.1,50.5L853.6,50.5L856.1,51.0L858.2,51.8L860.0,52.5L861.5,53.0L863.0,53.0L864.9,52.7L867.3,52.2L869.9,52.0L872.5,52.3L874.6,53.1L875.9,54.3L876.5,55.8L876.5,57.3L876.1,58.7L875.7,60.0Z M892.1,60.0L891.1,62.5L889.8,64.9L887.8,67.1L885.1,68.9L881.9,70.4L878.7,71.5L875.9,72.8L873.5,74.4L871.1,76.6L868.4,79.2L864.7,81.8L860.0,83.7L854.8,84.3L849.8,83.4L845.9,81.0L843.2,77.9L841.8,74.6L840.8,71.8L839.6,69.6L837.7,67.9L835.2,66.3L832.5,64.5L830.2,62.4L828.7,60.0L828.3,57.4L828.5,54.8L829.2,52.2L830.2,49.4L831.6,46.6L833.9,44.0L837.3,41.8L841.8,40.6L846.9,40.5L852.0,41.5L856.4,43.2L860.0,44.7L863.1,45.7L866.2,45.7L870.1,45.0L874.9,44.1L880.4,43.7L885.6,44.2L889.9,45.9L892.7,48.4L893.8,51.4L893.7,54.4L893.0,57.3L892.1,60.0Z M906.3,60.0L904.8,63.6L902.8,67.1L900.0,70.2L896.1,72.8L891.6,74.9L887.0,76.6L882.9,78.4L879.4,80.7L876.0,83.8L872.0,87.7L866.7,91.4L860.0,94.2L852.5,95.0L845.4,93.6L839.6,90.2L835.9,85.7L833.8,81.0L832.4,77.0L830.7,73.9L828.0,71.4L824.3,69.1L820.4,66.5L817.1,63.5L815.0,60.0L814.3,56.3L814.7,52.5L815.7,48.7L817.1,44.8L819.2,40.7L822.5,36.9L827.3,33.8L833.8,32.0L841.1,32.0L848.4,33.4L854.8,35.8L860.0,38.0L864.4,39.4L869.0,39.4L874.6,38.4L881.5,37.1L889.3,36.5L896.9,37.3L903.1,39.7L907.0,43.3L908.6,47.6L908.5,52.0L907.6,56.1L906.3,60.0Z M919.0,60.0L917.1,64.6L914.6,69.0L911.0,73.0L906.0,76.4L900.3,79.0L894.4,81.2L889.2,83.4L884.7,86.4L880.5,90.4L875.3,95.3L868.6,100.1L860.0,103.6L850.4,104.7L841.3,102.9L834.1,98.5L829.2,92.8L826.5,86.8L824.8,81.7L822.6,77.7L819.2,74.5L814.5,71.6L809.5,68.3L805.3,64.4L802.7,60.0L801.8,55.3L802.3,50.5L803.5,45.6L805.3,40.6L808.0,35.4L812.2,30.6L818.4,26.6L826.6,24.4L835.9,24.3L845.2,26.1L853.4,29.1L860.0,32.0L865.6,33.7L871.4,33.7L878.6,32.4L887.4,30.8L897.4,30.0L907.0,31.1L914.9,34.1L919.9,38.7L922.0,44.2L921.9,49.8L920.6,55.1L919.0,60.0Z M934.8,60.0L932.4,65.9L929.2,71.4L924.6,76.5L918.4,80.7L911.0,84.1L903.6,86.8L897.0,89.7L891.4,93.4L885.9,98.5L879.5,104.7L870.9,110.8L860.0,115.2L847.9,116.6L836.3,114.3L827.1,108.9L821.0,101.6L817.6,94.0L815.4,87.5L812.6,82.4L808.2,78.4L802.3,74.7L796.0,70.6L790.6,65.6L787.3,60.0L786.2,54.0L786.8,47.9L788.4,41.7L790.7,35.4L794.0,28.9L799.3,22.7L807.2,17.7L817.6,14.8L829.5,14.7L841.3,17.0L851.6,20.8L860.0,24.5L867.1,26.6L874.5,26.7L883.5,25.0L894.7,23.0L907.4,22.0L919.6,23.3L929.6,27.1L936.0,33.0L938.6,40.0L938.5,47.1L936.9,53.8L934.8,60.0Z M949.1,60.0L946.2,67.0L942.5,73.6L937.0,79.6L929.6,84.7L920.8,88.7L912.0,92.0L904.1,95.3L897.3,99.8L890.9,105.9L883.2,113.3L872.9,120.5L860.0,125.8L845.6,127.5L831.8,124.7L820.8,118.2L813.5,109.5L809.5,100.5L806.8,92.7L803.5,86.7L798.3,81.9L791.3,77.5L783.8,72.6L777.4,66.7L773.4,60.0L772.1,52.9L772.8,45.6L774.7,38.2L777.4,30.7L781.4,22.9L787.7,15.5L797.1,9.6L809.5,6.2L823.7,6.0L837.7,8.8L850.0,13.3L860.0,17.7L868.5,20.3L877.3,20.3L888.0,18.3L901.4,15.9L916.4,14.7L931.0,16.3L942.9,20.8L950.5,27.8L953.6,36.1L953.5,44.6L951.6,52.6L949.1,60.0Z M965.0,60.0L961.6,68.2L957.2,76.0L950.7,83.1L942.0,89.1L931.6,93.8L921.2,97.7L911.9,101.7L904.0,106.9L896.4,114.1L887.3,122.8L875.3,131.3L860.0,137.5L843.0,139.5L826.8,136.3L813.8,128.6L805.3,118.4L800.5,107.8L797.3,98.6L793.5,91.4L787.3,85.8L779.1,80.6L770.2,74.8L762.6,67.9L757.9,60.0L756.4,51.6L757.2,43.0L759.4,34.4L762.7,25.4L767.4,16.3L774.8,7.6L785.9,0.6L800.5,-3.4L817.2,-3.6L833.7,-0.3L848.2,5.0L860.0,10.1L870.0,13.2L880.4,13.2L893.0,10.9L908.8,8.0L926.5,6.7L943.7,8.5L957.7,13.9L966.6,22.1L970.3,31.9L970.1,41.8L967.9,51.3L965.0,60.0Z M978.9,60.0L975.1,69.3L970.1,78.1L962.7,86.2L952.8,93.0L941.2,98.3L929.3,102.7L918.8,107.2L909.8,113.1L901.2,121.3L890.9,131.1L877.3,140.8L860.0,147.8L840.7,150.0L822.4,146.4L807.7,137.7L798.0,126.1L792.6,114.1L789.0,103.7L784.6,95.6L777.7,89.2L768.3,83.4L758.2,76.8L749.7,68.9L744.4,60.0L742.6,50.5L743.6,40.8L746.1,31.0L749.8,20.8L755.1,10.5L763.5,0.6L776.1,-7.3L792.6,-11.8L811.5,-12.1L830.3,-8.3L846.7,-2.3L860.0,3.5L871.3,7.0L883.1,7.0L897.4,4.4L915.2,1.1L935.3,-0.4L954.8,1.6L970.7,7.7L980.8,17.1L985.0,28.1L984.7,39.4L982.2,50.1L978.9,60.0Z M991.6,60.0L987.5,70.3L981.9,80.1L973.8,89.0L962.8,96.5L949.9,102.4L936.8,107.3L925.1,112.2L915.2,118.8L905.7,127.8L894.3,138.7L879.1,149.4L860.0,157.2L838.7,159.7L818.3,155.7L802.1,146.1L791.3,133.2L785.3,119.9L781.4,108.4L776.5,99.4L768.9,92.4L758.5,85.9L747.3,78.6L737.9,69.9L732.0,60.0L730.0,49.5L731.1,38.7L733.9,27.9L737.9,16.6L743.9,5.2L753.2,-5.7L767.1,-14.5L785.4,-19.5L806.3,-19.8L827.1,-15.6L845.2,-9.0L860.0,-2.5L872.6,1.3L885.5,1.3L901.4,-1.6L921.2,-5.2L943.4,-6.9L965.0,-4.6L982.5,2.1L993.7,12.5L998.4,24.7L998.1,37.2L995.3,49.0L991.6,60.0Z M1008.9,60.0L1004.1,71.7L997.8,82.7L988.7,92.8L976.2,101.3L961.6,108.0L946.8,113.4L933.7,119.1L922.4,126.5L911.6,136.7L898.8,149.0L881.6,161.1L860.0,170.0L835.9,172.7L812.9,168.2L794.5,157.3L782.4,142.8L775.5,127.7L771.1,114.7L765.6,104.6L756.9,96.6L745.2,89.3L732.6,81.0L721.9,71.2L715.2,60.0L713.0,48.1L714.2,36.0L717.4,23.6L721.9,10.9L728.7,-2.0L739.2,-14.3L754.9,-24.3L775.6,-30.0L799.3,-30.2L822.8,-25.5L843.3,-18.0L860.0,-10.7L874.2,-6.4L888.9,-6.3L906.9,-9.6L929.2,-13.7L954.3,-15.6L978.7,-13.1L998.6,-5.4L1011.2,6.3L1016.5,20.1L1016.2,34.2L1013.0,47.6L1008.9,60.0Z M1099.1,20.0L1099.4,21.6L1098.6,23.1L1097.0,24.3L1094.8,25.3L1092.7,26.0L1090.7,26.6L1088.9,27.2L1087.3,27.7L1085.5,28.2L1083.7,28.5L1081.8,28.6L1080.0,28.6L1078.2,28.6L1076.2,28.6L1074.0,28.9L1071.5,29.1L1068.8,29.0L1066.2,28.5L1064.2,27.4L1063.3,25.9L1063.5,24.2L1064.5,22.6L1066.0,21.1L1067.2,20.0L1067.8,19.0L1067.9,18.0L1067.5,16.8L1067.2,15.5L1067.4,14.0L1068.2,12.7L1069.5,11.6L1071.3,10.8L1073.3,10.1L1075.5,9.6L1077.7,9.2L1080.0,9.0L1082.3,9.1L1084.5,9.7L1086.2,10.7L1087.4,12.1L1088.2,13.5L1088.7,14.6L1089.5,15.5L1090.9,16.1L1092.9,16.7L1095.3,17.5L1097.5,18.6L1099.1,20.0Z M1117.7,20.0L1118.5,23.1L1116.9,26.1L1113.6,28.6L1109.4,30.4L1105.1,31.8L1101.2,33.0L1097.7,34.2L1094.4,35.3L1091.0,36.3L1087.4,36.9L1083.7,37.1L1080.0,37.0L1076.4,36.9L1072.5,37.1L1068.2,37.5L1063.2,37.9L1057.7,37.8L1052.6,36.8L1048.8,34.8L1046.9,31.8L1047.3,28.3L1049.4,25.1L1052.2,22.3L1054.6,20.0L1055.9,18.1L1056.0,16.0L1055.3,13.7L1054.7,11.0L1055.0,8.2L1056.6,5.6L1059.3,3.4L1062.8,1.7L1066.8,0.4L1071.0,-0.6L1075.4,-1.4L1080.0,-1.8L1084.6,-1.6L1088.9,-0.4L1092.3,1.7L1094.7,4.3L1096.2,7.0L1097.3,9.4L1098.8,11.1L1101.6,12.3L1105.6,13.5L1110.3,15.0L1114.8,17.2L1117.7,20.0Z M1132.0,20.0L1133.1,24.3L1130.9,28.4L1126.3,31.8L1120.5,34.4L1114.6,36.3L1109.2,38.0L1104.4,39.6L1099.8,41.1L1095.1,42.4L1090.1,43.3L1085.0,43.5L1080.0,43.4L1075.0,43.4L1069.7,43.6L1063.7,44.2L1056.8,44.7L1049.3,44.6L1042.3,43.2L1036.9,40.3L1034.4,36.2L1034.9,31.5L1037.8,27.0L1041.7,23.1L1045.0,20.0L1046.8,17.3L1046.9,14.5L1045.9,11.3L1045.1,7.6L1045.5,3.7L1047.7,0.1L1051.4,-2.9L1056.3,-5.2L1061.8,-7.0L1067.6,-8.4L1073.7,-9.5L1080.0,-10.1L1086.4,-9.7L1092.2,-8.1L1097.0,-5.3L1100.3,-1.6L1102.3,2.1L1103.8,5.4L1106.0,7.7L1109.7,9.4L1115.2,11.0L1121.8,13.1L1127.9,16.1L1132.0,20.0Z M1150.7,20.0L1152.1,25.8L1149.2,31.4L1142.9,36.0L1135.0,39.5L1127.0,42.2L1119.7,44.4L1113.2,46.6L1106.9,48.7L1100.5,50.5L1093.8,51.6L1086.8,52.0L1080.0,51.8L1073.2,51.7L1066.0,52.1L1057.9,52.9L1048.5,53.6L1038.3,53.4L1028.7,51.6L1021.5,47.6L1018.0,42.0L1018.7,35.6L1022.6,29.5L1027.9,24.2L1032.5,20.0L1034.9,16.3L1035.0,12.6L1033.7,8.2L1032.6,3.2L1033.2,-2.1L1036.1,-7.0L1041.2,-11.1L1047.8,-14.3L1055.3,-16.7L1063.2,-18.6L1071.4,-20.1L1080.0,-20.9L1088.6,-20.4L1096.6,-18.2L1103.1,-14.3L1107.6,-9.4L1110.3,-4.3L1112.3,0.1L1115.3,3.3L1120.4,5.7L1127.9,7.8L1136.8,10.6L1145.1,14.7L1150.7,20.0Z M1165.7,20.0L1167.4,27.1L1163.9,33.8L1156.3,39.4L1146.7,43.7L1136.9,46.9L1128.1,49.6L1120.2,52.2L1112.7,54.8L1104.9,57.0L1096.7,58.3L1088.3,58.8L1080.0,58.6L1071.8,58.5L1063.1,58.9L1053.2,59.8L1041.8,60.7L1029.5,60.5L1017.8,58.2L1009.1,53.5L1004.8,46.7L1005.7,39.0L1010.4,31.5L1016.9,25.1L1022.4,20.0L1025.3,15.6L1025.4,11.0L1023.9,5.7L1022.6,-0.4L1023.2,-6.8L1026.8,-12.8L1033.0,-17.7L1041.0,-21.6L1050.1,-24.5L1059.6,-26.8L1069.6,-28.7L1080.0,-29.6L1090.5,-29.0L1100.2,-26.3L1108.0,-21.6L1113.4,-15.6L1116.7,-9.4L1119.2,-4.1L1122.8,-0.2L1128.9,2.6L1138.1,5.2L1148.8,8.6L1158.9,13.6L1165.7,20.0Z M1185.7,20.0L1187.9,28.7L1183.5,37.1L1174.1,44.0L1162.3,49.2L1150.2,53.2L1139.3,56.5L1129.6,59.8L1120.3,63.0L1110.7,65.6L1100.6,67.3L1090.2,67.8L1080.0,67.6L1069.8,67.5L1059.1,68.0L1046.9,69.2L1032.8,70.3L1017.6,70.0L1003.3,67.2L992.5,61.3L987.3,52.9L988.3,43.4L994.2,34.2L1002.1,26.3L1008.9,20.0L1012.6,14.5L1012.7,8.9L1010.8,2.3L1009.1,-5.2L1010.0,-13.1L1014.3,-20.4L1022.0,-26.5L1031.9,-31.3L1043.1,-34.9L1054.8,-37.8L1067.2,-40.0L1080.0,-41.2L1092.9,-40.4L1104.9,-37.1L1114.6,-31.4L1121.2,-24.0L1125.3,-16.3L1128.3,-9.7L1132.8,-4.9L1140.4,-1.5L1151.6,1.7L1164.9,6.0L1177.4,12.1L1185.7,20.0Z M1203.3,20.0L1205.8,30.2L1200.7,39.9L1189.7,48.0L1175.9,54.1L1161.9,58.7L1149.2,62.6L1137.8,66.4L1127.0,70.1L1115.8,73.2L1104.0,75.2L1091.9,75.8L1080.0,75.5L1068.2,75.4L1055.6,75.9L1041.4,77.3L1025.0,78.6L1007.3,78.3L990.6,75.0L977.9,68.2L971.9,58.4L973.0,47.3L979.9,36.5L989.2,27.4L997.1,20.0L1001.4,13.6L1001.5,7.1L999.3,-0.6L997.4,-9.4L998.3,-18.6L1003.4,-27.1L1012.3,-34.3L1023.9,-39.8L1036.9,-44.0L1050.7,-47.4L1065.0,-50.0L1080.0,-51.3L1095.1,-50.4L1109.0,-46.6L1120.3,-39.9L1128.1,-31.3L1132.8,-22.3L1136.4,-14.7L1141.5,-9.0L1150.4,-5.0L1163.5,-1.3L1179.0,3.7L1193.6,10.8L1203.3,20.0Z M1219.5,20.0L1222.3,31.5L1216.5,42.5L1204.2,51.6L1188.5,58.6L1172.7,63.8L1158.3,68.2L1145.4,72.5L1133.2,76.7L1120.5,80.2L1107.2,82.4L1093.5,83.1L1080.0,82.8L1066.6,82.6L1052.4,83.3L1036.3,84.9L1017.8,86.3L997.7,86.0L978.8,82.3L964.5,74.5L957.6,63.5L959.0,50.8L966.7,38.7L977.2,28.3L986.2,20.0L991.0,12.8L991.2,5.4L988.6,-3.3L986.5,-13.2L987.6,-23.6L993.3,-33.3L1003.4,-41.4L1016.5,-47.6L1031.3,-52.4L1046.8,-56.3L1063.1,-59.2L1080.0,-60.7L1097.0,-59.7L1112.8,-55.4L1125.6,-47.8L1134.4,-38.0L1139.7,-27.9L1143.8,-19.2L1149.6,-12.9L1159.7,-8.3L1174.5,-4.1L1192.1,1.5L1208.5,9.6L1219.5,20.0Z M1238.0,20.0L1241.2,33.1L1234.6,45.5L1220.6,55.8L1202.9,63.7L1185.0,69.6L1168.7,74.6L1154.1,79.4L1140.2,84.2L1125.9,88.2L1110.8,90.7L1095.3,91.5L1080.0,91.2L1064.8,90.9L1048.8,91.7L1030.5,93.5L1009.5,95.1L986.8,94.7L965.4,90.5L949.2,81.8L941.4,69.2L942.9,54.9L951.7,41.2L963.6,29.4L973.8,20.0L979.2,11.8L979.4,3.4L976.5,-6.4L974.1,-17.6L975.3,-29.4L981.8,-40.4L993.3,-49.6L1008.1,-56.6L1024.8,-62.0L1042.4,-66.4L1060.8,-69.7L1080.0,-71.4L1099.3,-70.3L1117.2,-65.4L1131.7,-56.8L1141.6,-45.7L1147.7,-34.3L1152.2,-24.5L1158.8,-17.2L1170.2,-12.1L1187.0,-7.3L1206.9,-0.9L1225.5,8.2L1238.0,20.0Z M1319.1,70.0L1317.9,71.4L1316.6,72.7L1315.3,73.9L1314.0,75.0L1312.7,76.0L1311.1,76.8L1309.2,77.4L1307.3,77.8L1305.5,78.2L1303.8,78.7L1302.0,79.4L1300.0,80.4L1297.6,81.3L1294.8,82.0L1291.9,82.1L1289.4,81.3L1287.6,79.9L1286.8,78.1L1286.8,76.2L1287.2,74.6L1287.3,73.2L1287.0,72.1L1286.2,71.1L1285.1,70.0L1284.2,68.7L1283.7,67.3L1283.8,65.9L1284.6,64.5L1285.7,63.2L1287.0,62.0L1288.5,60.8L1290.3,59.7L1292.5,58.8L1295.0,58.4L1297.6,58.6L1300.0,59.4L1302.0,60.6L1303.6,61.8L1304.9,62.7L1306.4,63.2L1308.3,63.3L1310.9,63.3L1313.8,63.5L1316.6,64.1L1318.8,65.2L1319.9,66.7L1319.9,68.4L1319.1,70.0Z M1334.8,70.0L1332.5,72.6L1330.1,75.0L1327.8,77.1L1325.5,79.1L1323.0,80.9L1320.1,82.4L1316.8,83.5L1313.3,84.2L1310.0,84.8L1306.8,85.7L1303.7,87.1L1300.0,88.8L1295.6,90.6L1290.5,91.8L1285.2,91.9L1280.7,90.6L1277.5,88.0L1276.1,84.7L1276.0,81.3L1276.7,78.3L1277.0,75.9L1276.4,73.9L1274.9,72.0L1272.9,70.0L1271.2,67.7L1270.4,65.1L1270.6,62.5L1272.0,60.0L1274.0,57.7L1276.4,55.5L1279.1,53.3L1282.4,51.2L1286.3,49.7L1290.8,49.0L1295.6,49.4L1300.0,50.8L1303.7,52.9L1306.5,55.1L1308.9,56.8L1311.6,57.7L1315.1,57.9L1319.8,57.8L1325.1,58.1L1330.2,59.3L1334.1,61.3L1336.2,64.0L1336.2,67.1L1334.8,70.0Z M1350.8,70.0L1347.5,73.8L1343.9,77.2L1340.6,80.3L1337.3,83.2L1333.6,85.9L1329.3,88.1L1324.5,89.6L1319.5,90.7L1314.6,91.7L1310.0,93.0L1305.3,94.9L1300.0,97.5L1293.6,100.1L1286.1,101.9L1278.4,102.0L1271.8,100.1L1267.1,96.4L1265.0,91.5L1265.0,86.5L1265.9,82.1L1266.4,78.6L1265.6,75.7L1263.4,73.0L1260.5,70.0L1257.9,66.6L1256.7,62.9L1257.1,59.1L1259.0,55.4L1262.0,52.0L1265.5,48.8L1269.5,45.5L1274.3,42.6L1280.0,40.3L1286.6,39.3L1293.5,39.8L1300.0,41.9L1305.3,45.0L1309.5,48.2L1313.0,50.7L1316.9,52.0L1322.1,52.3L1328.9,52.2L1336.7,52.7L1344.1,54.3L1349.8,57.3L1352.8,61.3L1352.9,65.7L1350.8,70.0Z M1366.3,70.0L1362.0,75.0L1357.4,79.5L1353.0,83.5L1348.7,87.3L1343.9,90.7L1338.3,93.6L1332.0,95.7L1325.4,97.1L1319.1,98.3L1313.1,100.0L1307.0,102.6L1300.0,105.9L1291.6,109.3L1281.9,111.7L1271.8,111.8L1263.1,109.3L1257.1,104.4L1254.3,98.1L1254.3,91.6L1255.5,85.8L1256.1,81.2L1255.0,77.4L1252.2,73.9L1248.4,70.0L1245.1,65.5L1243.4,60.7L1244.0,55.7L1246.5,51.0L1250.3,46.5L1254.9,42.3L1260.2,38.1L1266.4,34.2L1273.9,31.3L1282.5,29.9L1291.6,30.6L1300.0,33.4L1307.0,37.4L1312.4,41.5L1317.0,44.8L1322.1,46.5L1328.9,46.8L1337.7,46.8L1347.9,47.4L1357.6,49.5L1365.1,53.4L1369.0,58.6L1369.1,64.4L1366.3,70.0Z M1384.1,70.0L1378.6,76.4L1372.8,82.0L1367.2,87.1L1361.7,91.9L1355.7,96.3L1348.6,99.9L1340.6,102.5L1332.2,104.3L1324.2,105.9L1316.6,108.0L1308.8,111.3L1300.0,115.6L1289.3,119.9L1277.0,122.8L1264.3,123.0L1253.2,119.9L1245.6,113.6L1242.1,105.6L1242.1,97.4L1243.5,90.1L1244.3,84.2L1243.0,79.4L1239.3,74.9L1234.5,70.0L1230.4,64.4L1228.3,58.2L1229.0,51.9L1232.2,45.9L1237.0,40.3L1242.8,34.8L1249.5,29.5L1257.4,24.6L1266.9,20.9L1277.9,19.1L1289.3,20.1L1300.0,23.5L1308.8,28.6L1315.7,33.9L1321.5,38.0L1328.0,40.1L1336.6,40.6L1347.9,40.6L1360.7,41.3L1373.1,44.0L1382.5,49.0L1387.5,55.6L1387.6,62.9L1384.1,70.0Z M1400.6,70.0L1394.1,77.6L1387.1,84.4L1380.4,90.5L1373.8,96.2L1366.6,101.5L1358.1,105.8L1348.5,108.9L1338.5,111.1L1328.9,113.0L1319.8,115.5L1310.6,119.4L1300.0,124.5L1287.2,129.7L1272.5,133.2L1257.3,133.5L1244.0,129.7L1234.9,122.2L1230.7,112.6L1230.7,102.7L1232.4,94.0L1233.4,87.0L1231.8,81.2L1227.4,75.9L1221.7,70.0L1216.7,63.2L1214.2,55.9L1215.0,48.3L1218.8,41.2L1224.6,34.4L1231.6,27.9L1239.6,21.6L1249.1,15.7L1260.4,11.2L1273.5,9.1L1287.2,10.2L1300.0,14.4L1310.6,20.5L1318.8,26.8L1325.8,31.7L1333.5,34.3L1343.8,34.9L1357.3,34.8L1372.6,35.7L1387.4,38.9L1398.7,44.8L1404.7,52.7L1404.9,61.5L1400.6,70.0Z M1414.7,70.0L1407.2,78.7L1399.2,86.4L1391.6,93.3L1384.1,99.9L1375.9,105.8L1366.2,110.8L1355.3,114.4L1343.9,116.8L1332.9,119.0L1322.6,121.9L1312.0,126.3L1300.0,132.1L1285.4,138.0L1268.6,142.0L1251.3,142.3L1236.2,138.0L1225.8,129.5L1221.1,118.6L1221.0,107.3L1223.0,97.3L1224.1,89.3L1222.3,82.8L1217.3,76.7L1210.8,70.0L1205.0,62.3L1202.2,53.9L1203.2,45.3L1207.5,37.1L1214.1,29.4L1222.1,22.0L1231.2,14.8L1242.0,8.1L1254.9,3.0L1269.8,0.7L1285.4,1.9L1300.0,6.7L1312.1,13.6L1321.4,20.8L1329.4,26.4L1338.2,29.3L1349.9,30.0L1365.2,29.9L1382.8,30.9L1399.6,34.6L1412.5,41.3L1419.2,50.3L1419.5,60.3L1414.7,70.0Z M1431.6,70.0L1423.0,80.0L1413.8,88.8L1405.1,96.8L1396.5,104.3L1387.1,111.1L1376.0,116.8L1363.5,120.9L1350.4,123.7L1337.8,126.2L1325.9,129.5L1313.8,134.6L1300.0,141.3L1283.3,148.0L1264.0,152.6L1244.2,153.0L1226.8,148.0L1214.9,138.3L1209.4,125.7L1209.3,112.8L1211.7,101.4L1212.9,92.2L1210.8,84.7L1205.1,77.7L1197.6,70.0L1191.0,61.2L1187.8,51.5L1188.9,41.7L1193.9,32.3L1201.5,23.5L1210.6,15.0L1221.0,6.7L1233.4,-1.0L1248.3,-6.9L1265.4,-9.6L1283.3,-8.1L1300.0,-2.7L1313.8,5.3L1324.6,13.6L1333.7,19.9L1343.8,23.3L1357.3,24.0L1374.9,23.9L1395.0,25.2L1414.3,29.4L1429.1,37.1L1436.8,47.4L1437.1,58.9L1431.6,70.0Z M1445.0,70.0L1435.6,81.0L1425.5,90.7L1415.8,99.5L1406.4,107.8L1396.0,115.3L1383.8,121.5L1369.9,126.1L1355.5,129.2L1341.7,131.9L1328.6,135.6L1315.2,141.2L1300.0,148.6L1281.6,156.0L1260.3,161.1L1238.5,161.4L1219.4,156.0L1206.2,145.3L1200.2,131.4L1200.1,117.2L1202.6,104.6L1204.0,94.5L1201.7,86.2L1195.4,78.5L1187.1,70.0L1179.9,60.3L1176.4,49.6L1177.6,38.8L1183.1,28.5L1191.4,18.7L1201.4,9.3L1213.0,0.2L1226.6,-8.2L1243.0,-14.7L1261.8,-17.7L1281.6,-16.1L1300.0,-10.1L1315.3,-1.3L1327.1,7.8L1337.1,14.8L1348.3,18.5L1363.1,19.4L1382.5,19.2L1404.7,20.6L1426.0,25.2L1442.3,33.7L1450.8,45.1L1451.1,57.8L1445.0,70.0Z M1463.9,70.0L1453.2,82.4L1441.8,93.4L1430.9,103.4L1420.2,112.7L1408.5,121.2L1394.7,128.3L1379.1,133.4L1362.8,136.9L1347.1,140.0L1332.3,144.2L1317.2,150.5L1300.0,158.8L1279.2,167.2L1255.2,173.0L1230.4,173.4L1208.8,167.2L1193.9,155.1L1187.2,139.4L1187.1,123.3L1190.0,109.1L1191.5,97.6L1188.9,88.3L1181.8,79.6L1172.4,70.0L1164.3,59.0L1160.3,47.0L1161.6,34.7L1167.8,23.0L1177.2,12.0L1188.6,1.4L1201.6,-8.9L1217.0,-18.4L1235.6,-25.7L1256.8,-29.1L1279.2,-27.3L1300.0,-20.6L1317.2,-10.6L1330.6,-0.3L1342.0,7.6L1354.6,11.8L1371.4,12.8L1393.3,12.6L1418.3,14.1L1442.4,19.4L1460.8,29.0L1470.4,41.9L1470.8,56.2L1463.9,70.0Z M1437.4,0.0L1436.3,1.3L1434.9,2.5L1433.5,3.5L1432.6,4.5L1432.2,5.7L1432.0,7.4L1431.6,9.3L1430.5,11.2L1428.6,12.7L1425.9,13.6L1422.9,13.6L1420.0,12.7L1417.5,11.5L1415.6,10.1L1414.0,8.9L1412.4,8.1L1410.7,7.5L1408.8,6.9L1406.9,6.2L1405.2,5.3L1403.9,4.1L1402.8,2.8L1401.9,1.5L1401.1,0.0L1400.3,-1.6L1399.8,-3.3L1400.0,-5.1L1401.1,-6.7L1403.3,-7.9L1406.3,-8.5L1409.4,-8.5L1412.3,-8.2L1414.7,-7.9L1416.5,-8.0L1418.2,-8.6L1420.0,-9.6L1422.3,-10.7L1425.0,-11.5L1427.9,-11.8L1430.6,-11.3L1432.8,-10.3L1434.5,-8.9L1435.7,-7.4L1436.7,-5.9L1437.4,-4.4L1437.9,-3.0L1438.0,-1.5L1437.4,-0.0Z M1450.5,0.0L1448.5,2.3L1446.0,4.3L1443.7,6.0L1442.1,7.8L1441.3,10.1L1440.9,12.9L1440.2,16.2L1438.4,19.6L1435.0,22.3L1430.4,23.8L1425.1,23.7L1420.0,22.3L1415.7,20.1L1412.3,17.6L1409.5,15.6L1406.8,14.1L1403.7,13.0L1400.4,12.1L1397.1,10.8L1394.1,9.2L1391.8,7.2L1389.9,5.0L1388.4,2.6L1386.9,0.0L1385.5,-2.8L1384.6,-5.8L1384.9,-8.9L1387.0,-11.7L1390.8,-13.8L1396.0,-14.8L1401.5,-14.8L1406.6,-14.3L1410.7,-13.9L1413.9,-14.0L1416.8,-15.1L1420.0,-16.8L1424.0,-18.8L1428.8,-20.2L1433.8,-20.6L1438.6,-19.8L1442.5,-18.0L1445.4,-15.6L1447.5,-13.0L1449.2,-10.4L1450.5,-7.8L1451.4,-5.2L1451.5,-2.5L1450.5,-0.0Z M1462.2,0.0L1459.5,3.2L1456.0,5.9L1452.8,8.4L1450.6,10.9L1449.5,13.9L1449.0,17.8L1448.0,22.4L1445.4,27.1L1440.8,30.9L1434.3,32.9L1427.0,32.8L1420.0,30.9L1414.1,27.7L1409.4,24.4L1405.5,21.6L1401.7,19.5L1397.5,18.1L1392.9,16.7L1388.3,15.0L1384.2,12.7L1380.9,10.0L1378.4,6.9L1376.3,3.5L1374.1,0.0L1372.2,-3.9L1371.0,-8.1L1371.5,-12.4L1374.3,-16.2L1379.6,-19.1L1386.7,-20.5L1394.4,-20.5L1401.4,-19.8L1407.1,-19.2L1411.6,-19.4L1415.5,-20.9L1420.0,-23.3L1425.6,-26.0L1432.2,-27.9L1439.2,-28.5L1445.7,-27.4L1451.1,-24.9L1455.1,-21.6L1458.1,-18.0L1460.4,-14.4L1462.3,-10.8L1463.4,-7.2L1463.5,-3.5L1462.2,-0.0Z M1476.2,0.0L1472.6,4.3L1468.1,7.9L1463.8,11.2L1460.8,14.5L1459.3,18.6L1458.6,23.8L1457.3,29.9L1453.9,36.1L1447.7,41.2L1439.1,43.9L1429.4,43.8L1420.0,41.2L1412.1,37.0L1405.8,32.6L1400.6,28.8L1395.6,26.0L1390.0,24.1L1383.8,22.3L1377.7,20.0L1372.2,17.0L1367.9,13.3L1364.5,9.1L1361.6,4.7L1358.8,0.0L1356.2,-5.2L1354.7,-10.8L1355.3,-16.5L1359.1,-21.6L1366.2,-25.4L1375.6,-27.3L1385.8,-27.4L1395.2,-26.4L1402.8,-25.6L1408.7,-25.9L1414.0,-27.8L1420.0,-31.1L1427.4,-34.6L1436.2,-37.2L1445.6,-38.0L1454.3,-36.5L1461.4,-33.2L1466.8,-28.8L1470.8,-24.0L1473.9,-19.2L1476.4,-14.4L1477.9,-9.6L1478.1,-4.7L1476.2,-0.0Z M1491.0,0.0L1486.5,5.4L1480.7,10.0L1475.2,14.1L1471.5,18.3L1469.6,23.4L1468.8,30.0L1467.1,37.8L1462.8,45.6L1455.0,52.0L1444.1,55.4L1431.8,55.3L1420.0,52.0L1410.0,46.7L1402.1,41.1L1395.5,36.3L1389.2,32.9L1382.1,30.4L1374.3,28.1L1366.6,25.2L1359.7,21.4L1354.2,16.8L1350.0,11.5L1346.3,6.0L1342.8,0.0L1339.5,-6.5L1337.5,-13.6L1338.3,-20.8L1343.1,-27.3L1352.0,-32.1L1364.0,-34.5L1376.9,-34.6L1388.7,-33.4L1398.3,-32.3L1405.8,-32.7L1412.5,-35.1L1420.0,-39.2L1429.4,-43.7L1440.5,-47.0L1452.3,-47.9L1463.3,-46.1L1472.3,-42.0L1479.1,-36.4L1484.1,-30.3L1488.0,-24.2L1491.1,-18.1L1493.1,-12.1L1493.3,-5.9L1491.0,-0.0Z M1502.3,0.0L1497.0,6.2L1490.3,11.6L1484.0,16.3L1479.6,21.2L1477.5,27.2L1476.5,34.8L1474.6,43.8L1469.6,52.9L1460.6,60.3L1448.0,64.3L1433.7,64.1L1420.0,60.2L1408.4,54.1L1399.3,47.6L1391.7,42.1L1384.2,38.1L1376.1,35.2L1367.1,32.6L1358.1,29.2L1350.1,24.8L1343.8,19.4L1338.8,13.4L1334.6,6.9L1330.5,0.0L1326.7,-7.6L1324.4,-15.8L1325.3,-24.1L1330.9,-31.7L1341.2,-37.2L1355.1,-40.0L1370.0,-40.1L1383.7,-38.7L1394.8,-37.4L1403.5,-37.8L1411.3,-40.7L1420.0,-45.5L1430.8,-50.7L1443.7,-54.5L1457.4,-55.6L1470.1,-53.4L1480.6,-48.6L1488.5,-42.2L1494.3,-35.1L1498.9,-28.0L1502.5,-21.0L1504.8,-14.0L1504.9,-6.9L1502.3,-0.0Z M155.1,150.0L154.7,151.2L154.0,152.3L153.1,153.3L151.8,154.2L150.3,154.9L148.8,155.4L147.5,156.0L146.4,156.8L145.3,157.9L144.0,159.2L142.2,160.4L140.0,161.3L137.5,161.5L135.2,161.0L133.4,159.8L132.2,158.3L131.5,156.8L131.0,155.5L130.4,154.5L129.4,153.7L128.2,153.0L126.9,152.2L125.9,151.1L125.2,150.0L125.0,148.8L125.1,147.5L125.4,146.3L125.9,145.0L126.5,143.6L127.6,142.4L129.3,141.4L131.4,140.9L133.9,140.9L136.3,141.4L138.3,142.2L140.0,142.9L141.4,143.2L143.0,143.2L144.9,142.8L147.2,142.4L149.7,142.2L152.2,142.5L154.1,143.3L155.3,144.5L155.8,146.0L155.8,147.4L155.5,148.7L155.1,150.0Z M169.4,150.0L168.5,152.3L167.2,154.5L165.4,156.5L162.9,158.1L160.0,159.4L157.1,160.5L154.6,161.7L152.4,163.3L150.4,165.4L147.8,167.9L144.3,170.3L140.0,171.9L135.2,172.3L130.7,171.3L127.2,169.0L124.9,166.1L123.5,163.2L122.6,160.7L121.4,158.8L119.5,157.3L117.1,155.8L114.6,154.2L112.5,152.2L111.3,150.0L110.9,147.6L111.1,145.2L111.7,142.8L112.5,140.2L113.9,137.7L116.0,135.2L119.2,133.3L123.4,132.3L128.1,132.3L132.7,133.3L136.8,134.8L140.0,136.2L142.8,136.9L145.8,136.7L149.4,136.0L153.9,135.2L158.9,134.8L163.7,135.4L167.5,137.0L169.8,139.4L170.8,142.2L170.7,144.9L170.1,147.6L169.4,150.0Z M183.6,150.0L182.3,153.4L180.4,156.7L177.7,159.6L173.9,162.1L169.6,164.0L165.4,165.6L161.6,167.4L158.5,169.7L155.4,172.8L151.6,176.5L146.4,180.1L140.0,182.6L132.9,183.1L126.2,181.6L121.0,178.2L117.5,173.9L115.6,169.6L114.1,165.9L112.3,163.1L109.6,160.8L106.0,158.7L102.3,156.2L99.2,153.3L97.4,150.0L96.8,146.5L97.1,142.9L98.0,139.3L99.2,135.5L101.2,131.7L104.4,128.1L109.1,125.2L115.3,123.7L122.4,123.8L129.2,125.3L135.2,127.5L140.0,129.5L144.2,130.5L148.6,130.3L154.0,129.2L160.7,128.0L168.1,127.5L175.1,128.4L180.8,130.8L184.3,134.3L185.7,138.4L185.6,142.5L184.7,146.4L183.6,150.0Z M200.9,150.0L199.0,154.8L196.4,159.3L192.6,163.4L187.4,166.8L181.4,169.5L175.4,171.8L170.2,174.2L165.8,177.5L161.5,181.9L156.1,187.0L149.0,192.0L140.0,195.4L130.1,196.3L120.8,194.1L113.5,189.4L108.7,183.4L105.9,177.4L103.9,172.2L101.4,168.2L97.5,165.1L92.5,162.1L87.3,158.7L83.0,154.6L80.5,150.0L79.7,145.1L80.1,140.1L81.3,135.0L83.1,129.8L85.8,124.4L90.3,119.4L96.9,115.4L105.6,113.3L115.4,113.4L125.0,115.5L133.3,118.6L140.0,121.4L145.8,122.8L152.0,122.5L159.5,121.0L168.9,119.2L179.2,118.6L189.0,119.8L196.9,123.1L201.8,128.0L203.7,133.8L203.6,139.5L202.4,144.9L200.9,150.0Z M212.8,150.0L210.6,155.7L207.5,161.1L202.9,166.0L196.7,170.1L189.5,173.4L182.4,176.1L176.1,179.0L170.8,182.9L165.7,188.1L159.3,194.3L150.7,200.2L140.0,204.4L128.2,205.3L117.0,202.7L108.3,197.2L102.5,190.0L99.2,182.7L96.8,176.6L93.8,171.8L89.2,168.1L83.2,164.5L77.0,160.4L71.9,155.5L68.8,150.0L67.8,144.2L68.4,138.2L69.8,132.1L71.9,125.8L75.2,119.4L80.5,113.4L88.5,108.7L98.8,106.1L110.6,106.2L122.0,108.7L132.0,112.4L140.0,115.7L147.0,117.5L154.3,117.1L163.4,115.3L174.5,113.2L186.9,112.4L198.7,113.9L208.1,117.9L213.9,123.7L216.3,130.6L216.1,137.5L214.7,144.0L212.8,150.0Z M227.7,150.0L225.1,156.9L221.3,163.4L215.8,169.3L208.3,174.3L199.6,178.1L191.0,181.4L183.5,184.9L177.2,189.6L170.9,195.9L163.3,203.4L153.0,210.5L140.0,215.5L125.7,216.7L112.3,213.6L101.7,206.8L94.8,198.2L90.8,189.4L88.0,182.0L84.3,176.3L78.8,171.8L71.6,167.4L64.1,162.5L57.9,156.7L54.2,150.0L53.0,143.0L53.7,135.8L55.4,128.4L58.0,120.9L61.9,113.1L68.3,105.9L77.9,100.2L90.4,97.1L104.5,97.3L118.3,100.3L130.3,104.7L140.0,108.7L148.4,110.8L157.2,110.4L168.2,108.2L181.6,105.7L196.5,104.7L210.7,106.5L222.0,111.3L229.1,118.4L231.9,126.6L231.7,134.9L230.0,142.7L227.7,150.0Z M242.8,150.0L239.7,158.1L235.3,165.7L228.7,172.6L220.0,178.4L209.8,183.0L199.8,186.8L191.0,190.9L183.5,196.4L176.2,203.8L167.2,212.5L155.2,220.9L140.0,226.7L123.3,228.1L107.6,224.4L95.2,216.6L87.1,206.4L82.4,196.2L79.1,187.5L74.8,180.8L68.3,175.5L59.8,170.4L51.1,164.7L43.9,157.8L39.5,150.0L38.1,141.7L38.9,133.3L41.0,124.8L43.9,115.9L48.6,106.8L56.1,98.3L67.3,91.7L81.9,88.1L98.4,88.3L114.6,91.7L128.6,96.9L140.0,101.6L149.8,104.1L160.2,103.6L173.0,101.0L188.7,98.1L206.2,96.9L222.8,99.0L236.0,104.6L244.3,112.9L247.6,122.6L247.4,132.3L245.4,141.5L242.8,150.0Z M551.3,160.0L551.7,161.0L552.6,162.1L553.6,163.5L554.3,165.1L554.1,166.7L552.9,168.0L550.9,168.8L548.5,169.0L545.9,168.8L543.7,168.4L541.7,168.1L540.0,167.8L538.3,167.7L536.7,167.7L535.0,167.5L533.3,167.1L531.8,166.6L530.4,165.9L528.9,165.3L527.2,164.5L525.4,163.7L523.7,162.7L522.5,161.4L522.1,160.0L522.8,158.6L524.4,157.4L526.6,156.6L529.0,156.1L530.9,155.7L532.3,155.2L533.1,154.5L533.8,153.4L534.8,152.2L536.1,151.1L537.9,150.2L540.0,149.8L542.2,149.9L544.2,150.3L546.1,150.9L547.9,151.5L549.6,152.3L551.0,153.2L552.1,154.3L552.5,155.5L552.5,156.8L552.0,158.0L551.5,159.1L551.3,160.0Z M563.5,160.0L564.4,162.0L566.2,164.3L568.3,167.2L569.6,170.5L569.3,173.8L566.9,176.5L562.7,178.2L557.6,178.7L552.3,178.3L547.6,177.5L543.6,176.7L540.0,176.3L536.6,176.1L533.1,175.9L529.5,175.5L526.1,174.8L523.0,173.6L520.0,172.3L516.9,170.9L513.5,169.4L509.8,167.7L506.2,165.6L503.6,162.9L502.8,160.0L504.2,157.1L507.6,154.7L512.3,152.9L517.1,151.9L521.1,151.1L523.9,150.1L525.7,148.6L527.2,146.4L529.1,143.8L531.9,141.4L535.7,139.7L540.0,138.9L544.5,139.0L548.8,139.8L552.8,141.0L556.5,142.4L559.9,144.0L562.9,145.9L565.1,148.2L566.1,150.7L565.9,153.4L564.9,155.9L563.8,158.1L563.5,160.0Z M574.9,160.0L576.2,162.9L578.9,166.4L582.1,170.7L584.0,175.6L583.4,180.5L579.8,184.5L573.7,187.0L566.1,187.8L558.3,187.2L551.3,186.0L545.3,184.8L540.0,184.1L534.9,183.8L529.7,183.6L524.5,183.1L519.4,181.9L514.7,180.3L510.3,178.3L505.7,176.2L500.6,174.0L495.1,171.4L489.9,168.3L486.0,164.4L484.8,160.0L486.9,155.7L491.9,152.1L498.8,149.5L506.0,147.9L512.0,146.8L516.1,145.3L518.8,143.0L521.0,139.8L523.8,136.0L528.0,132.4L533.6,129.9L540.0,128.7L546.7,128.9L553.0,130.1L559.0,131.8L564.5,133.9L569.6,136.3L574.0,139.1L577.2,142.4L578.7,146.3L578.4,150.2L576.9,153.9L575.4,157.1L574.9,160.0Z M587.0,160.0L588.7,163.9L592.4,168.6L596.6,174.4L599.2,181.0L598.5,187.6L593.6,193.0L585.3,196.4L575.1,197.4L564.7,196.6L555.2,195.0L547.2,193.4L540.0,192.5L533.1,192.1L526.2,191.8L519.1,191.0L512.3,189.5L506.0,187.3L500.0,184.6L493.8,181.8L487.0,178.8L479.6,175.4L472.5,171.1L467.4,165.9L465.7,160.0L468.4,154.2L475.3,149.3L484.6,145.9L494.2,143.7L502.3,142.2L507.9,140.2L511.5,137.2L514.5,132.8L518.3,127.7L523.8,122.9L531.3,119.4L540.0,117.8L549.0,118.1L557.5,119.7L565.5,122.1L573.0,124.9L579.8,128.1L585.8,131.8L590.1,136.4L592.1,141.5L591.7,146.8L589.7,151.8L587.6,156.1L587.0,160.0Z M597.9,160.0L600.0,164.9L604.6,170.6L609.7,177.8L613.0,185.9L612.0,194.0L606.1,200.7L595.9,204.8L583.2,206.1L570.4,205.1L558.8,203.1L548.8,201.2L540.0,200.0L531.5,199.5L522.9,199.2L514.3,198.2L505.9,196.4L498.1,193.6L490.7,190.3L483.1,186.8L474.7,183.2L465.6,179.0L456.9,173.7L450.5,167.2L448.5,160.0L451.9,152.9L460.3,146.9L471.7,142.6L483.6,140.0L493.5,138.0L500.4,135.7L504.9,131.9L508.5,126.5L513.2,120.2L520.1,114.3L529.3,110.0L540.0,108.1L551.0,108.4L561.6,110.4L571.4,113.3L580.6,116.7L589.1,120.7L596.4,125.3L601.7,130.9L604.1,137.2L603.6,143.8L601.2,149.9L598.6,155.2L597.9,160.0Z M609.1,160.0L611.6,165.8L617.1,172.7L623.3,181.2L627.1,190.9L626.0,200.6L618.9,208.5L606.7,213.5L591.6,215.0L576.3,213.9L562.4,211.5L550.5,209.2L540.0,207.7L529.9,207.2L519.6,206.8L509.3,205.7L499.3,203.4L490.0,200.1L481.2,196.2L472.1,192.0L462.1,187.7L451.2,182.6L440.8,176.4L433.2,168.7L430.7,160.0L434.8,151.5L444.8,144.3L458.5,139.2L472.6,136.1L484.5,133.8L492.8,130.9L498.1,126.4L502.4,120.0L508.0,112.5L516.3,105.5L527.2,100.3L540.0,98.0L553.2,98.4L565.8,100.8L577.5,104.3L588.4,108.4L598.6,113.0L607.3,118.6L613.6,125.2L616.5,132.8L616.0,140.6L613.1,148.0L610.0,154.3L609.1,160.0Z M618.4,160.0L621.2,166.6L627.4,174.4L634.5,184.1L638.8,195.1L637.6,206.1L629.5,215.1L615.7,220.7L598.6,222.4L581.2,221.1L565.4,218.4L551.9,215.8L540.0,214.2L528.5,213.5L516.9,213.1L505.1,211.8L493.8,209.3L483.3,205.5L473.3,201.1L463.0,196.4L451.6,191.4L439.2,185.7L427.4,178.6L418.8,169.8L416.0,160.0L420.6,150.3L432.0,142.2L447.5,136.4L463.6,132.8L477.0,130.3L486.4,127.0L492.5,121.9L497.4,114.6L503.7,106.1L513.0,98.1L525.5,92.3L540.0,89.6L555.0,90.1L569.3,92.8L582.6,96.7L595.0,101.4L606.5,106.7L616.4,113.0L623.5,120.6L626.9,129.1L626.2,138.0L622.9,146.3L619.4,153.6L618.4,160.0Z M629.9,160.0L633.2,167.5L640.3,176.5L648.3,187.6L653.3,200.3L651.9,212.8L642.6,223.2L626.8,229.6L607.2,231.6L587.2,230.1L569.2,227.0L553.7,224.0L540.0,222.1L526.9,221.4L513.5,220.8L500.0,219.4L487.0,216.5L474.9,212.2L463.5,207.1L451.7,201.7L438.6,196.0L424.5,189.4L410.9,181.3L401.0,171.3L397.8,160.0L403.1,148.9L416.1,139.6L433.9,133.0L452.4,128.9L467.8,125.9L478.6,122.2L485.5,116.3L491.1,107.9L498.4,98.2L509.1,89.0L523.4,82.4L540.0,79.3L557.2,79.8L573.6,82.9L588.8,87.5L603.0,92.8L616.2,98.9L627.6,106.1L635.8,114.8L639.6,124.6L638.8,134.8L635.1,144.3L631.1,152.6L629.9,160.0Z M999.1,150.0L998.0,151.5L996.9,152.8L995.8,154.0L994.6,155.2L993.1,156.2L991.3,156.9L989.3,157.5L987.5,157.9L985.7,158.5L984.1,159.3L982.2,160.4L980.0,161.7L977.3,162.7L974.3,163.1L971.5,162.7L969.2,161.5L967.9,159.7L967.4,157.8L967.4,156.0L967.4,154.5L967.0,153.3L966.1,152.3L964.8,151.2L963.6,150.0L962.8,148.6L962.6,147.1L963.0,145.7L963.8,144.3L964.9,142.9L966.2,141.5L967.7,140.2L969.7,139.0L972.1,138.3L974.9,138.2L977.6,138.8L980.0,139.8L981.9,141.0L983.5,142.0L985.0,142.5L987.0,142.6L989.5,142.4L992.5,142.3L995.5,142.7L998.1,143.6L999.8,145.0L1000.4,146.6L1000.0,148.4L999.1,150.0Z M1014.8,150.0L1012.8,152.7L1010.8,155.1L1008.8,157.3L1006.6,159.4L1003.8,161.2L1000.5,162.6L997.0,163.6L993.6,164.5L990.4,165.5L987.4,167.0L984.1,169.0L980.0,171.2L975.1,173.1L969.6,173.8L964.4,173.1L960.4,170.9L957.9,167.7L957.0,164.2L957.0,160.9L957.0,158.2L956.3,156.0L954.6,154.2L952.4,152.2L950.2,150.0L948.7,147.5L948.4,144.8L949.1,142.1L950.6,139.5L952.5,137.0L954.8,134.5L957.6,132.1L961.3,130.0L965.7,128.7L970.7,128.6L975.6,129.6L980.0,131.4L983.5,133.6L986.4,135.4L989.2,136.3L992.7,136.5L997.3,136.2L1002.7,136.0L1008.3,136.6L1013.0,138.3L1016.0,140.8L1017.1,143.9L1016.5,147.0L1014.8,150.0Z M1026.8,150.0L1024.1,153.6L1021.5,156.8L1018.8,159.9L1015.7,162.7L1012.0,165.1L1007.6,167.0L1002.9,168.3L998.3,169.5L994.0,170.8L990.0,172.9L985.5,175.6L980.0,178.6L973.4,181.0L966.1,182.0L959.1,181.1L953.6,178.1L950.3,173.8L949.0,169.1L949.0,164.6L949.1,161.0L948.1,158.1L945.9,155.6L942.8,153.0L939.9,150.0L937.9,146.6L937.4,143.0L938.4,139.4L940.4,135.9L943.0,132.5L946.1,129.1L949.9,125.9L954.8,123.1L960.7,121.4L967.4,121.2L974.1,122.5L980.0,125.0L984.7,127.9L988.6,130.3L992.4,131.6L997.1,131.8L1003.2,131.4L1010.5,131.2L1018.0,132.0L1024.4,134.2L1028.5,137.6L1029.9,141.8L1029.1,146.0L1026.8,150.0Z M1042.3,150.0L1038.7,154.8L1035.2,159.1L1031.6,163.2L1027.6,166.9L1022.6,170.1L1016.8,172.6L1010.5,174.4L1004.3,175.9L998.7,177.7L993.3,180.4L987.3,184.0L980.0,188.0L971.2,191.3L961.4,192.6L952.2,191.4L944.8,187.5L940.4,181.7L938.8,175.4L938.8,169.5L938.8,164.6L937.6,160.8L934.6,157.5L930.5,154.0L926.6,150.0L924.0,145.5L923.3,140.7L924.6,135.9L927.3,131.3L930.8,126.8L934.9,122.2L940.0,117.9L946.4,114.2L954.4,111.9L963.3,111.6L972.2,113.4L980.0,116.8L986.3,120.6L991.4,123.8L996.5,125.5L1002.7,125.8L1010.9,125.2L1020.7,125.0L1030.6,126.1L1039.1,129.0L1044.5,133.6L1046.4,139.0L1045.3,144.7L1042.3,150.0Z M1058.0,150.0L1053.5,156.0L1049.0,161.4L1044.6,166.5L1039.5,171.1L1033.3,175.2L1026.0,178.3L1018.1,180.5L1010.4,182.4L1003.4,184.7L996.6,188.1L989.1,192.6L980.0,197.6L969.0,201.6L956.8,203.3L945.2,201.7L936.0,196.9L930.5,189.7L928.5,181.7L928.4,174.3L928.5,168.3L926.9,163.5L923.2,159.4L918.1,155.0L913.2,150.0L909.9,144.3L909.1,138.3L910.8,132.4L914.1,126.6L918.4,120.9L923.6,115.3L929.9,109.9L938.0,105.3L947.9,102.4L959.1,102.0L970.2,104.2L980.0,108.4L987.9,113.3L994.3,117.2L1000.6,119.4L1008.4,119.7L1018.7,119.0L1030.8,118.7L1043.3,120.1L1053.9,123.7L1060.7,129.4L1063.1,136.3L1061.7,143.4L1058.0,150.0Z M1073.4,150.0L1068.0,157.1L1062.6,163.6L1057.3,169.7L1051.3,175.3L1043.8,180.1L1035.1,183.9L1025.6,186.6L1016.4,188.8L1008.0,191.6L999.8,195.6L990.9,201.0L980.0,206.9L966.8,211.8L952.2,213.9L938.3,212.0L927.3,206.1L920.7,197.5L918.3,188.0L918.3,179.2L918.3,171.9L916.4,166.2L912.0,161.2L905.9,156.0L900.0,150.0L896.1,143.2L895.1,136.0L897.1,128.9L901.1,122.0L906.3,115.2L912.4,108.4L920.0,101.9L929.7,96.4L941.6,93.0L955.0,92.5L968.3,95.2L980.0,100.2L989.4,106.0L997.1,110.8L1004.7,113.4L1014.1,113.7L1026.3,112.9L1040.9,112.5L1055.8,114.2L1068.5,118.6L1076.6,125.4L1079.5,133.6L1077.8,142.1L1073.4,150.0Z M1089.8,150.0L1083.5,158.4L1077.2,166.0L1070.9,173.2L1063.8,179.8L1055.1,185.5L1044.8,189.9L1033.7,193.0L1022.9,195.7L1012.9,198.9L1003.3,203.6L992.8,210.0L980.0,217.0L964.4,222.7L947.3,225.1L930.9,222.9L918.1,216.0L910.3,205.9L907.4,194.7L907.4,184.3L907.4,175.8L905.2,169.1L900.0,163.2L892.8,157.1L885.9,150.0L881.3,142.0L880.2,133.5L882.5,125.1L887.2,117.0L893.3,109.0L900.5,101.1L909.5,93.4L920.9,87.0L934.8,82.9L950.6,82.4L966.2,85.5L980.0,91.5L991.1,98.3L1000.1,103.9L1009.0,106.9L1020.1,107.3L1034.5,106.3L1051.6,105.9L1069.2,107.9L1084.1,113.0L1093.7,121.0L1097.0,130.7L1095.1,140.7L1089.8,150.0Z M1105.7,150.0L1098.4,159.6L1091.2,168.3L1084.0,176.5L1075.9,184.1L1065.9,190.6L1054.1,195.6L1041.4,199.2L1029.0,202.3L1017.7,205.9L1006.7,211.4L994.7,218.6L980.0,226.6L962.2,233.2L942.6,235.9L923.9,233.4L909.1,225.5L900.2,214.0L896.9,201.1L896.9,189.2L897.0,179.5L894.4,171.8L888.5,165.1L880.2,158.1L872.3,150.0L867.0,140.8L865.8,131.2L868.4,121.6L873.8,112.3L880.8,103.1L889.1,94.0L899.3,85.3L912.3,77.9L928.3,73.2L946.3,72.6L964.2,76.2L980.0,83.0L992.7,90.8L1003.0,97.2L1013.2,100.7L1025.8,101.2L1042.3,100.0L1062.0,99.6L1082.1,101.8L1099.1,107.7L1110.1,116.8L1113.9,127.9L1111.6,139.3L1105.7,150.0Z M1236.9,160.0L1235.8,161.3L1234.5,162.4L1233.2,163.4L1231.9,164.2L1230.7,165.0L1229.4,165.8L1228.0,166.4L1226.4,166.8L1224.7,167.0L1223.2,167.2L1221.6,167.6L1220.0,168.1L1218.1,168.8L1215.9,169.4L1213.4,169.8L1211.1,169.5L1209.1,168.7L1208.0,167.4L1207.8,165.8L1208.1,164.2L1208.7,162.9L1209.0,161.8L1208.9,160.9L1208.2,160.0L1207.5,159.0L1206.9,157.8L1206.7,156.6L1207.1,155.4L1208.0,154.3L1209.2,153.3L1210.5,152.4L1212.0,151.5L1213.8,150.8L1215.7,150.2L1217.9,150.1L1220.0,150.5L1221.9,151.3L1223.3,152.4L1224.4,153.5L1225.4,154.3L1226.6,154.7L1228.3,154.9L1230.5,155.1L1232.9,155.4L1235.1,156.1L1236.7,157.3L1237.2,158.6L1236.9,160.0Z M1255.6,160.0L1253.5,162.7L1250.6,165.1L1247.8,167.1L1245.1,168.9L1242.6,170.7L1239.9,172.2L1236.8,173.5L1233.4,174.3L1230.0,174.8L1226.7,175.3L1223.4,176.0L1220.0,177.1L1216.0,178.6L1211.3,179.9L1206.1,180.6L1201.1,180.1L1197.1,178.4L1194.7,175.6L1194.2,172.2L1194.9,168.9L1196.1,166.1L1196.8,163.8L1196.5,161.9L1195.2,160.0L1193.5,157.9L1192.2,155.4L1191.9,152.8L1192.8,150.3L1194.6,148.0L1197.1,145.9L1200.0,144.0L1203.2,142.1L1206.9,140.5L1211.0,139.4L1215.5,139.1L1220.0,139.9L1223.9,141.7L1227.0,144.0L1229.3,146.2L1231.3,147.9L1233.9,148.9L1237.5,149.2L1242.1,149.6L1247.3,150.3L1252.0,151.9L1255.2,154.2L1256.4,157.1L1255.6,160.0Z M1272.3,160.0L1269.1,164.0L1264.9,167.4L1260.7,170.4L1256.9,173.1L1253.1,175.6L1249.1,177.9L1244.6,179.8L1239.7,181.0L1234.7,181.8L1229.8,182.5L1225.0,183.5L1220.0,185.1L1214.2,187.2L1207.3,189.2L1199.7,190.2L1192.3,189.5L1186.4,187.0L1182.9,182.8L1182.1,177.9L1183.2,173.1L1184.9,168.9L1186.0,165.6L1185.5,162.8L1183.6,160.0L1181.2,156.9L1179.3,153.3L1178.8,149.5L1180.1,145.8L1182.8,142.4L1186.4,139.3L1190.7,136.5L1195.4,133.7L1200.7,131.4L1206.8,129.7L1213.4,129.4L1220.0,130.6L1225.7,133.1L1230.2,136.5L1233.6,139.8L1236.6,142.3L1240.4,143.7L1245.6,144.2L1252.5,144.7L1260.0,145.8L1266.9,148.1L1271.6,151.5L1273.4,155.7L1272.3,160.0Z M1290.0,160.0L1285.8,165.3L1280.2,169.9L1274.6,173.9L1269.4,177.5L1264.4,181.0L1259.0,184.0L1253.0,186.5L1246.4,188.1L1239.6,189.2L1233.1,190.1L1226.7,191.5L1220.0,193.7L1212.2,196.5L1203.0,199.1L1192.8,200.5L1182.9,199.6L1175.0,196.1L1170.3,190.6L1169.2,184.0L1170.7,177.5L1173.0,172.0L1174.4,167.5L1173.7,163.7L1171.2,160.0L1168.0,155.8L1165.4,151.0L1164.8,145.9L1166.5,141.0L1170.1,136.4L1175.0,132.3L1180.7,128.5L1187.0,124.8L1194.2,121.6L1202.3,119.5L1211.2,119.0L1220.0,120.6L1227.7,124.0L1233.7,128.5L1238.2,132.9L1242.3,136.2L1247.3,138.1L1254.3,138.9L1263.5,139.5L1273.6,141.0L1282.8,144.0L1289.2,148.6L1291.5,154.2L1290.0,160.0Z M1308.7,160.0L1303.3,166.7L1296.2,172.6L1289.1,177.6L1282.5,182.2L1276.2,186.5L1269.4,190.4L1261.8,193.5L1253.4,195.6L1244.9,196.9L1236.6,198.1L1228.5,199.8L1220.0,202.6L1210.1,206.2L1198.4,209.5L1185.5,211.2L1173.0,210.1L1163.0,205.7L1157.1,198.7L1155.7,190.4L1157.6,182.2L1160.5,175.2L1162.2,169.5L1161.4,164.7L1158.3,160.0L1154.1,154.7L1150.9,148.6L1150.1,142.2L1152.2,135.9L1156.8,130.2L1163.0,125.0L1170.2,120.1L1178.2,115.5L1187.3,111.4L1197.6,108.7L1208.9,108.1L1220.0,110.1L1229.7,114.4L1237.4,120.1L1243.1,125.7L1248.2,129.9L1254.6,132.3L1263.5,133.2L1275.1,134.0L1287.9,135.9L1299.5,139.7L1307.6,145.6L1310.6,152.7L1308.7,160.0Z M1324.3,160.0L1318.0,167.9L1309.7,174.8L1301.3,180.7L1293.6,186.1L1286.1,191.2L1278.1,195.8L1269.2,199.4L1259.3,201.9L1249.3,203.5L1239.5,204.8L1230.0,206.9L1220.0,210.2L1208.4,214.4L1194.6,218.3L1179.4,220.3L1164.7,218.9L1152.9,213.8L1146.0,205.5L1144.4,195.7L1146.6,186.1L1150.0,177.8L1152.0,171.2L1151.1,165.6L1147.4,160.0L1142.5,153.7L1138.7,146.6L1137.8,139.0L1140.3,131.7L1145.7,124.9L1153.0,118.8L1161.4,113.0L1170.8,107.6L1181.5,102.8L1193.7,99.6L1206.9,98.9L1220.0,101.2L1231.5,106.4L1240.4,113.1L1247.2,119.7L1253.2,124.6L1260.7,127.4L1271.2,128.5L1284.8,129.4L1299.8,131.6L1313.5,136.2L1323.0,143.0L1326.6,151.4L1324.3,160.0Z M1340.4,160.0L1333.0,169.2L1323.5,177.1L1313.8,183.9L1304.9,190.2L1296.3,196.0L1287.1,201.3L1276.7,205.5L1265.4,208.4L1253.8,210.2L1242.5,211.7L1231.6,214.1L1220.0,217.9L1206.6,222.7L1190.7,227.3L1173.2,229.6L1156.2,228.0L1142.6,222.1L1134.6,212.5L1132.7,201.2L1135.3,190.1L1139.3,180.6L1141.6,172.9L1140.5,166.4L1136.2,160.0L1130.6,152.8L1126.2,144.5L1125.1,135.8L1128.0,127.3L1134.3,119.5L1142.7,112.4L1152.4,105.8L1163.3,99.5L1175.6,94.0L1189.7,90.3L1204.9,89.5L1220.0,92.2L1233.2,98.1L1243.6,105.9L1251.3,113.4L1258.3,119.2L1266.9,122.4L1279.0,123.7L1294.7,124.7L1312.1,127.3L1327.9,132.5L1338.9,140.4L1343.0,150.0L1340.4,160.0Z"/></g></svg>
<div class="r" style="left:0px;top:88px;width:1440px;height:3px;background:#0c6ad0"></div>
<div class="r" style="left:0px;top:0px;width:1440px;height:50px;background:#fff"></div>
<svg style="left:16px;top:11px" width="42" height="30" viewBox="0 0 42 30"><g fill="#3fa0dc"><circle cx="11" cy="9.5" r="7.6"/><circle cx="23" cy="10.5" r="8"/><circle cx="32.5" cy="13.5" r="8.5"/><circle cx="8.5" cy="17.5" r="7.4"/><circle cx="16" cy="21.5" r="7.4"/><circle cx="25.5" cy="18.5" r="7.5"/></g></svg>
<div class="r" style="left:436px;top:10px;width:537px;height:32px;border:1px solid #dddbda;border-radius:4px;background:#fff"></div>
<div class="r" style="left:491px;top:11px;width:1px;height:30px;background:#dddbda"></div>
<div class="t" style="left:449.20px;top:18.95px;font-size:13px;color:#080707;transform:scaleX(0.9790);transform-origin:0 0;">All</div>
<svg style="left:471px;top:23.5px" width="9" height="6" viewBox="0 0 9 6"><path d="M0 0H9L4.5 6Z" fill="#706e6b"/></svg>
<svg style="left:512px;top:18px" width="14" height="15" viewBox="0 0 14 15"><circle cx="6" cy="6" r="4.6" fill="none" stroke="#a8a6a4" stroke-width="1.6"/><path d="M9.3 9.6L13 13.6" stroke="#a8a6a4" stroke-width="1.8" stroke-linecap="round"/></svg>
<div class="t" style="left:543.42px;top:18.57px;font-size:13.5px;color:#3e3e3c;transform:scaleX(0.9598);transform-origin:0 0;">Search Salesforce</div>
<div class="r" style="left:1198px;top:14px;width:42px;height:24px;border:1px solid #9a9795;border-radius:4px"></div>
<div class="r" style="left:1221px;top:15px;width:1.8px;height:22px;background:#9a9795"></div>
<svg style="left:1202.5px;top:18px" width="15" height="15" viewBox="0 0 15 15"><path d="M7.50,0.60L9.79,5.44L15.11,6.13L11.21,9.81L12.20,15.07L7.50,12.50L2.80,15.07L3.79,9.81L-0.11,6.13L5.21,5.44Z" fill="#9a9795"/></svg>
<svg style="left:1227px;top:25px" width="8.5" height="5.4" viewBox="0 0 10 6"><path d="M0 0H10L5 6Z" fill="#9a9795"/></svg>
<div class="r" style="left:1256px;top:16px;width:20px;height:20px;background:#9a9795;border-radius:3px"></div>
<svg style="left:1256px;top:16px" width="20" height="20" viewBox="0 0 20 20"><path d="M10 3V17M3 10H17" stroke="#fff" stroke-width="2.1"/></svg>
<svg style="left:1288px;top:16px" width="16" height="20" viewBox="0 0 16 20"><path d="M3.2 6.2A4.8 4.6 0 1 1 10.8 9.6Q8 11 8 13.4" fill="none" stroke="#9a9795" stroke-width="3"/><circle cx="8" cy="17.4" r="1.7" fill="#9a9795"/></svg>
<svg style="left:1318px;top:16px" width="20" height="20" viewBox="0 0 20 20"><g fill="#9a9795"><circle cx="10" cy="10" r="7"/><rect x="8" y="1" width="4" height="18" rx="1"/><rect x="8" y="1" width="4" height="18" rx="1" transform="rotate(60 10 10)"/><rect x="8" y="1" width="4" height="18" rx="1" transform="rotate(120 10 10)"/></g><circle cx="10" cy="10" r="4.1" fill="#fff"/><path d="M11.2 6.8L8.2 10.6H10L8.8 13.4L11.8 9.4H10Z" fill="#9a9795"/></svg>
<svg style="left:1350px;top:16px" width="20" height="20" viewBox="0 0 20 20"><path d="M4 14V7A6 6.4 0 0 1 16 7V14Z" fill="#9a9795"/><rect x="0.8" y="12.6" width="18.4" height="2.9" rx="1.4" fill="#9a9795"/><path d="M7.8 16.4H12.2A2.2 2.4 0 0 1 7.8 16.4Z" fill="#9a9795"/></svg>
<svg style="left:1382px;top:4px" width="44" height="44" viewBox="0 0 44 44"><defs><clipPath id="avc"><circle cx="22" cy="21.7" r="16.4"/></clipPath></defs><circle cx="22" cy="21.7" r="16.7" fill="#f2f5f9" stroke="#4a4846" stroke-width="0.7"/><g clip-path="url(#avc)"><path d="M12.5 16L12.8 10.5Q13.5 9.8 16.5 12.5Q22 10.8 27.5 12.5Q30.5 9.8 31.2 10.5L31.5 16Q35 24 32 31Q28 38.5 22 38.5Q16 38.5 12 31Q9 24 12.5 16Z" fill="#a6c0e4"/><path d="M12.6 15.5L12.8 10.5Q13.5 9.8 16.2 12.4Q14 13.5 12.6 15.5Z M31.4 15.5L31.2 10.5Q30.5 9.8 27.8 12.4Q30 13.5 31.4 15.5Z" fill="#6f8fb6"/><ellipse cx="22" cy="25" rx="8.3" ry="7.4" fill="#f7f7f7"/><path d="M13.8 24Q13.5 17.5 22 17.2Q30.5 17.5 30.2 24Q28 21.5 25.5 20.8L24.6 19.2L23.2 20.6Q18 20.2 13.8 24Z" fill="#6a8baf"/><ellipse cx="17.8" cy="26.5" rx="0.9" ry="1.2" fill="#6a8baf"/><ellipse cx="26" cy="27" rx="0.9" ry="1.1" fill="#6a8baf"/><circle cx="21.4" cy="37.5" r="3.2" fill="#6f8fb6"/></g></svg>
<div class="r" style="left:0px;top:50px;width:1440px;height:38px;background:#fff"></div>
<div class="r" style="left:25.0px;top:59.0px;width:4.8px;height:4.8px;border-radius:50%;background:#7a7876"></div>
<div class="r" style="left:25.0px;top:66.9px;width:4.8px;height:4.8px;border-radius:50%;background:#7a7876"></div>
<div class="r" style="left:25.0px;top:75.0px;width:4.8px;height:4.8px;border-radius:50%;background:#7a7876"></div>
<div class="r" style="left:33.0px;top:59.0px;width:4.8px;height:4.8px;border-radius:50%;background:#7a7876"></div>
<div class="r" style="left:33.0px;top:66.9px;width:4.8px;height:4.8px;border-radius:50%;background:#7a7876"></div>
<div class="r" style="left:33.0px;top:75.0px;width:4.8px;height:4.8px;border-radius:50%;background:#7a7876"></div>
<div class="r" style="left:41.1px;top:59.0px;width:4.8px;height:4.8px;border-radius:50%;background:#7a7876"></div>
<div class="r" style="left:41.1px;top:66.9px;width:4.8px;height:4.8px;border-radius:50%;background:#7a7876"></div>
<div class="r" style="left:41.1px;top:75.0px;width:4.8px;height:4.8px;border-radius:50%;background:#7a7876"></div>
<div class="t" style="left:67.78px;top:59.58px;font-size:19.1px;color:#080707;transform:scaleX(0.9519);transform-origin:0 0;">Service</div>
<div class="r" style="left:489px;top:50px;width:87px;height:38px;background:#e3eaf4"></div>
<div class="r" style="left:489px;top:50px;width:87px;height:3.5px;background:#0c6ad0"></div>
<div class="t" style="left:162.35px;top:62.55px;font-size:13.6px;color:#080707;transform:scaleX(1.0566);transform-origin:0 0;">Home</div>
<div class="t" style="left:224.31px;top:62.55px;font-size:13.6px;color:#080707;transform:scaleX(1.0079);transform-origin:0 0;">Chatter</div>
<div class="t" style="left:293.75px;top:62.55px;font-size:13.6px;color:#080707;transform:scaleX(0.9840);transform-origin:0 0;">Accounts</div>
<svg style="left:362px;top:67.5px" width="12" height="7" viewBox="0 0 12 7"><path d="M0.8 0.8L6 6L11.2 0.8" fill="none" stroke="#514f4d" stroke-width="1.4"/></svg>
<div class="t" style="left:398.31px;top:62.55px;font-size:13.6px;color:#080707;transform:scaleX(1.0096);transform-origin:0 0;">Contacts</div>
<svg style="left:465.5px;top:67.5px" width="12" height="7" viewBox="0 0 12 7"><path d="M0.8 0.8L6 6L11.2 0.8" fill="none" stroke="#514f4d" stroke-width="1.4"/></svg>
<div class="t" style="left:501.88px;top:62.55px;font-size:13.6px;color:#080707;transform:scaleX(0.9144);transform-origin:0 0;">Cases</div>
<svg style="left:550px;top:67.5px" width="12" height="7" viewBox="0 0 12 7"><path d="M0.8 0.8L6 6L11.2 0.8" fill="none" stroke="#514f4d" stroke-width="1.4"/></svg>
<div class="t" style="left:585.91px;top:62.55px;font-size:13.6px;color:#080707;transform:scaleX(0.9992);transform-origin:0 0;">Reports</div>
<svg style="left:646px;top:67.5px" width="12" height="7" viewBox="0 0 12 7"><path d="M0.8 0.8L6 6L11.2 0.8" fill="none" stroke="#514f4d" stroke-width="1.4"/></svg>
<div class="t" style="left:682.93px;top:62.55px;font-size:13.6px;color:#080707;transform:scaleX(0.9855);transform-origin:0 0;">Dashboards</div>
<svg style="left:768px;top:67.5px" width="12" height="7" viewBox="0 0 12 7"><path d="M0.8 0.8L6 6L11.2 0.8" fill="none" stroke="#514f4d" stroke-width="1.4"/></svg>
<svg style="left:1410px;top:65px" width="13" height="13" viewBox="0 0 13 13"><circle cx="6.5" cy="6.5" r="6.5" fill="#514f4d"/><rect x="5.7" y="5.4" width="1.7" height="4.6" fill="#fff"/><circle cx="6.55" cy="3.7" r="0.95" fill="#fff"/></svg>
<div class="r" style="left:13px;top:102px;width:1414px;height:146px;background:#fff;border-radius:4px;border:1px solid #dddbda;overflow:hidden"></div>
<div class="r" style="left:14px;top:103px;width:1412px;height:66px;background:#f3f2f2;border-radius:4px 4px 0 0"></div>
<div class="r" style="left:30px;top:118px;width:32px;height:32px;background:#ecc850;border-radius:2px"></div>
<svg style="left:30px;top:118px" width="32" height="32" viewBox="0 0 32 32"><path d="M12.8 9.6V8Q12.8 6.9 13.9 6.9H18.1Q19.2 6.9 19.2 8V9.6" fill="none" stroke="#fff" stroke-width="1.5" stroke-linecap="round"/><rect x="6.3" y="10.9" width="19.3" height="14.2" rx="2" fill="#fff"/></svg>
<div class="t" style="left:73.78px;top:117.77px;font-size:13.5px;color:#3e3e3c;transform:scaleX(0.9193);transform-origin:0 0;">Case</div>
<div class="t" style="left:73.23px;top:132.03px;font-size:18.8px;color:#080707;font-weight:bold;transform:scaleX(0.9590);transform-origin:0 0;">Power Issue</div>
<div class="r" style="left:1021px;top:120.5px;width:388px;height:30.5px;border:1px solid #dddbda;border-radius:4px;background:#fff"></div>
<div class="r" style="left:1183.5px;top:120.5px;width:1px;height:30.5px;background:#dddbda"></div>
<div class="r" style="left:1306.5px;top:120.5px;width:1px;height:30.5px;background:#dddbda"></div>
<div class="r" style="left:1378.2px;top:120.5px;width:1px;height:30.5px;background:#dddbda"></div>
<div class="t" style="left:1037.20px;top:128.84px;font-size:13.7px;color:#1b4d9c;transform:scaleX(0.9889);transform-origin:0 0;">Add Multiple Records</div>
<div class="t" style="left:1198.83px;top:128.84px;font-size:13.7px;color:#1b4d9c;transform:scaleX(0.9842);transform-origin:0 0;">Change Owner</div>
<div class="t" style="left:1321.69px;top:128.84px;font-size:13.7px;color:#1b4d9c;transform:scaleX(1.0164);transform-origin:0 0;">Delete</div>
<svg style="left:1388px;top:134px" width="13" height="7" viewBox="0 0 13 7"><path d="M0 0H13L6.5 7Z" fill="#514f4d"/></svg>
<div class="t" style="left:32.96px;top:190.91px;font-size:13.2px;color:#3e3e3c;transform:scaleX(0.9826);transform-origin:0 0;">Priority</div>
<div class="t" style="left:32.73px;top:211.71px;font-size:14.5px;color:#080707;transform:scaleX(1.0946);transform-origin:0 0;">Medium</div>
<div class="t" style="left:160.44px;top:190.91px;font-size:13.2px;color:#3e3e3c;transform:scaleX(0.9349);transform-origin:0 0;">Status</div>
<div class="t" style="left:159.78px;top:211.71px;font-size:14.5px;color:#080707;transform:scaleX(1.0497);transform-origin:0 0;">New</div>
<div class="t" style="left:275.60px;top:190.91px;font-size:13.2px;color:#3e3e3c;">Case Number</div>
<div class="t" style="left:275.60px;top:211.71px;font-size:14.5px;color:#080707;">00001027</div>
<div class="r" style="left:12px;top:261px;width:944px;height:600px;background:#fff;border-radius:4px;border:1px solid #dddbda"></div>
<div class="t" style="left:44.34px;top:276.66px;font-size:16.7px;color:#080707;font-weight:bold;transform:scaleX(0.9791);transform-origin:0 0;">Related</div>
<div class="r" style="left:29px;top:307px;width:910px;height:1px;background:#dddbda"></div>
<div class="r" style="left:29px;top:306px;width:90px;height:3px;background:#0c6ad0"></div>
<div class="r" style="left:29px;top:325px;width:910px;height:178px;background:#fff;border:1px solid #dddbda;border-top:3px solid #aba5a5;border-radius:4px"></div>
<div class="r" style="left:46px;top:344px;width:24px;height:24px;background:#a094ed;border-radius:3px"></div>
<svg style="left:46px;top:344px" width="24" height="24" viewBox="0 0 24 24"><rect x="5" y="7" width="14" height="10" rx="1" fill="#fff"/><circle cx="9" cy="10.8" r="1.7" fill="#a094ed"/><path d="M6.3 15.2Q6.5 12.9 9 12.9Q11.5 12.9 11.7 15.2Z" fill="#a094ed"/><rect x="12.6" y="10" width="4.6" height="1.3" fill="#a094ed"/><rect x="12.6" y="12.8" width="4.6" height="1.3" fill="#a094ed"/></svg>
<div class="t" style="left:81.86px;top:347.17px;font-size:16px;color:#080707;font-weight:bold;transform:scaleX(1.0034);transform-origin:0 0;">Contact Roles (1)</div>
<div class="r" style="left:30px;top:384px;width:908px;height:1px;background:#dddbda"></div>
<div class="r" style="left:30px;top:415px;width:908px;height:1px;background:#dddbda"></div>
<div class="r" style="left:30px;top:445px;width:908px;height:1px;background:#dddbda"></div>
<div class="r" style="left:30px;top:458px;width:908px;height:1px;background:#dddbda"></div>
<div class="t" style="left:53.72px;top:393.29px;font-size:12.75px;color:#3e3e3c;font-weight:bold;letter-spacing:1px;transform:scaleX(0.9370);transform-origin:0 0;">CONTACT NAME</div>
<div class="t" style="left:251.86px;top:393.29px;font-size:12.75px;color:#3e3e3c;font-weight:bold;letter-spacing:1px;transform:scaleX(0.8920);transform-origin:0 0;">ROLE</div>
<div class="t" style="left:53.13px;top:422.87px;font-size:13.5px;color:#2470d6;transform:scaleX(0.9868);transform-origin:0 0;">Lauren Boyle</div>
<div class="r" style="left:54px;top:439px;width:77px;height:1px;border-top:1px dotted #2470d6"></div>
<div class="t" style="left:252.60px;top:422.87px;font-size:13.5px;color:#080707;">Business Contact</div>
<div class="r" style="left:29px;top:515px;width:910px;height:60px;background:#fff;border:1px solid #dddbda;border-top:3px solid #aba5a5;border-radius:4px"></div>
<div class="r" style="left:46px;top:534px;width:24px;height:24px;background:#55bc9c;border-radius:2px"></div>
<svg style="left:46px;top:534px" width="24" height="24" viewBox="0 0 24 24"><path d="M5.8 17.4L12.2 11" stroke="#fff" stroke-width="2.6" stroke-linecap="round"/><circle cx="14.5" cy="9.5" r="4.4" fill="#fff"/><circle cx="17.4" cy="6.6" r="2.4" fill="#55bc9c"/></svg>
<div class="t" style="left:81.94px;top:536.69px;font-size:16.5px;color:#080707;font-weight:bold;transform:scaleX(0.9943);transform-origin:0 0;">Open Activities (0)</div>
<div class="r" style="left:29px;top:587px;width:910px;height:60px;background:#fff;border:1px solid #dddbda;border-top:3px solid #aba5a5;border-radius:4px"></div>
<div class="r" style="left:46px;top:606px;width:24px;height:24px;background:#55bc9c;border-radius:2px"></div>
<svg style="left:46px;top:606px" width="24" height="24" viewBox="0 0 24 24"><path d="M5.8 17.4L12.2 11" stroke="#fff" stroke-width="2.6" stroke-linecap="round"/><circle cx="14.5" cy="9.5" r="4.4" fill="#fff"/><circle cx="17.4" cy="6.6" r="2.4" fill="#55bc9c"/></svg>
<div class="t" style="left:82.20px;top:608.69px;font-size:16.5px;color:#080707;font-weight:bold;transform:scaleX(0.9750);transform-origin:0 0;">Activity History (0)</div>
<div class="r" style="left:750.5px;top:602px;width:171px;height:31.5px;border:1px solid #dddbda;border-radius:4px;background:#fff"></div>
<div class="r" style="left:841.4px;top:602px;width:1px;height:31.5px;background:#dddbda"></div>
<div class="t" style="left:766.34px;top:611.80px;font-size:13.9px;color:#1b4d9c;transform:scaleX(0.9532);transform-origin:0 0;">Log a Call</div>
<div class="t" style="left:857.23px;top:611.80px;font-size:13.9px;color:#1b4d9c;transform:scaleX(0.9979);transform-origin:0 0;">View All</div>
<div class="r" style="left:29px;top:659px;width:910px;height:60px;background:#fff;border:1px solid #dddbda;border-top:3px solid #aba5a5;border-radius:4px"></div>
<div class="r" style="left:46px;top:678px;width:24px;height:24px;background:#55bc9c;border-radius:2px"></div>
<svg style="left:46px;top:678px" width="24" height="24" viewBox="0 0 24 24"><path d="M5.8 17.4L12.2 11" stroke="#fff" stroke-width="2.6" stroke-linecap="round"/><circle cx="14.5" cy="9.5" r="4.4" fill="#fff"/><circle cx="17.4" cy="6.6" r="2.4" fill="#55bc9c"/></svg>
<div class="t" style="left:81.95px;top:680.69px;font-size:16.5px;color:#080707;font-weight:bold;transform:scaleX(0.9828);transform-origin:0 0;">Case Comments (0)</div>
<div class="r" style="left:861.4px;top:674px;width:60.5px;height:31.5px;border:1px solid #dddbda;border-radius:4px;background:#fff"></div>
<div class="t" style="left:876.79px;top:684.00px;font-size:13.9px;color:#1b4d9c;transform:scaleX(0.9979);transform-origin:0 0;">New</div>
<div class="r" style="left:29px;top:731px;width:910px;height:60px;background:#fff;border:1px solid #dddbda;border-top:3px solid #aba5a5;border-radius:4px"></div>
<div class="r" style="left:968px;top:261px;width:460px;height:600px;background:#fff;border-radius:4px;border:1px solid #dddbda"></div>
<div class="t" style="left:1225.74px;top:284.67px;font-size:12.2px;color:#3e3e3c;transform:scaleX(1.0175);transform-origin:0 0;">Status</div>
<div class="t" style="left:1225.09px;top:304.51px;font-size:14.5px;color:#080707;transform:scaleX(1.0461);transform-origin:0 0;">New</div>
<div class="r" style="left:1226px;top:325px;width:173px;height:1px;background:#dddbda"></div>
<svg style="left:1385px;top:305px" width="13" height="13" viewBox="0 0 13 13"><path d="M9.6 0.8L12.2 3.4L4.4 11.2L1.8 8.6Z M1.3 9.4L3.6 11.7L0.4 12.6Z" fill="#e0dedd"/></svg>
<div class="t" style="left:1225.27px;top:332.67px;font-size:12.2px;color:#3e3e3c;transform:scaleX(1.0550);transform-origin:0 0;">Priority</div>
<div class="t" style="left:1225.02px;top:352.51px;font-size:14.5px;color:#080707;transform:scaleX(1.1006);transform-origin:0 0;">Medium</div>
<div class="r" style="left:1226px;top:373px;width:173px;height:1px;background:#dddbda"></div>
<svg style="left:1385px;top:353px" width="13" height="13" viewBox="0 0 13 13"><path d="M9.6 0.8L12.2 3.4L4.4 11.2L1.8 8.6Z M1.3 9.4L3.6 11.7L0.4 12.6Z" fill="#e0dedd"/></svg>
<div class="t" style="left:1225.67px;top:380.67px;font-size:12.2px;color:#3e3e3c;transform:scaleX(1.0359);transform-origin:0 0;">Contact Phone</div>
<div class="t" style="left:1225.38px;top:400.51px;font-size:14.5px;color:#080707;transform:scaleX(1.0562);transform-origin:0 0;">(212) 842-5500</div>
<div class="r" style="left:1226px;top:421px;width:173px;height:1px;background:#dddbda"></div>
<div class="t" style="left:1225.67px;top:428.67px;font-size:12.2px;color:#3e3e3c;transform:scaleX(1.0343);transform-origin:0 0;">Contact Email</div>
<div class="t" style="left:1225.34px;top:448.51px;font-size:14.5px;color:#2470d6;transform:scaleX(1.0192);transform-origin:0 0;">lboyle@uog.com</div>
<div class="r" style="left:1226px;top:469px;width:173px;height:1px;background:#dddbda"></div>
<div class="t" style="left:1225.69px;top:476.67px;font-size:12.2px;color:#3e3e3c;transform:scaleX(1.0030);transform-origin:0 0;">Case Origin</div>
<div class="t" style="left:1226.23px;top:496.51px;font-size:14.5px;color:#080707;transform:scaleX(1.0085);transform-origin:0 0;">Web</div>
<div class="r" style="left:1226px;top:517px;width:173px;height:1px;background:#dddbda"></div>
<svg style="left:1385px;top:497px" width="13" height="13" viewBox="0 0 13 13"><path d="M9.6 0.8L12.2 3.4L4.4 11.2L1.8 8.6Z M1.3 9.4L3.6 11.7L0.4 12.6Z" fill="#e0dedd"/></svg>
<div class="r" style="left:997px;top:325px;width:173px;height:1px;background:#dddbda"></div>
<div class="r" style="left:997px;top:373px;width:173px;height:1px;background:#dddbda"></div>
<div class="r" style="left:997px;top:421px;width:173px;height:1px;background:#dddbda"></div>
<div class="r" style="left:997px;top:469px;width:173px;height:1px;background:#dddbda"></div>
<div class="r" style="left:997px;top:517px;width:173px;height:1px;background:#dddbda"></div>
<div class="r" style="left:997px;top:565px;width:173px;height:1px;background:#dddbda"></div>
<div class="r" style="left:1140px;top:454px;width:1.5px;height:1.5px;background:#2470d6"></div>
<div class="r" style="left:1140px;top:459px;width:1.5px;height:1.5px;background:#2470d6"></div>
<svg style="left:1155px;top:305px" width="13" height="13" viewBox="0 0 13 13"><circle cx="5.5" cy="5" r="2.8" fill="#e0dedd"/><path d="M0.5 12.5Q1 8.5 5.5 8.5Q10 8.5 10.5 12.5Z" fill="#e0dedd"/><path d="M8.5 1.5A3 3 0 0 1 12 4.5" fill="none" stroke="#e0dedd" stroke-width="1"/></svg>
<svg style="left:1156px;top:401px" width="13" height="13" viewBox="0 0 13 13"><path d="M9.6 0.8L12.2 3.4L4.4 11.2L1.8 8.6Z M1.3 9.4L3.6 11.7L0.4 12.6Z" fill="#e0dedd"/></svg>
<svg style="left:1156px;top:449px" width="13" height="13" viewBox="0 0 13 13"><path d="M9.6 0.8L12.2 3.4L4.4 11.2L1.8 8.6Z M1.3 9.4L3.6 11.7L0.4 12.6Z" fill="#e0dedd"/></svg>
<svg style="left:1156px;top:497px" width="13" height="13" viewBox="0 0 13 13"><path d="M9.6 0.8L12.2 3.4L4.4 11.2L1.8 8.6Z M1.3 9.4L3.6 11.7L0.4 12.6Z" fill="#e0dedd"/></svg>
<svg style="left:1156px;top:545px" width="13" height="13" viewBox="0 0 13 13"><path d="M9.6 0.8L12.2 3.4L4.4 11.2L1.8 8.6Z M1.3 9.4L3.6 11.7L0.4 12.6Z" fill="#e0dedd"/></svg>
<div class="t" style="left:997.14px;top:580.67px;font-size:12.2px;color:#3e3e3c;transform:scaleX(1.0123);transform-origin:0 0;">Web Email</div>
<div class="r" style="left:997px;top:621px;width:173px;height:1px;background:#dddbda"></div>
<svg style="left:1156px;top:601px" width="13" height="13" viewBox="0 0 13 13"><path d="M9.6 0.8L12.2 3.4L4.4 11.2L1.8 8.6Z M1.3 9.4L3.6 11.7L0.4 12.6Z" fill="#e0dedd"/></svg>
<div class="t" style="left:997.14px;top:628.67px;font-size:12.2px;color:#3e3e3c;transform:scaleX(1.0308);transform-origin:0 0;">Web Name</div>
<div class="r" style="left:997px;top:669px;width:173px;height:1px;background:#dddbda"></div>
<svg style="left:1156px;top:649px" width="13" height="13" viewBox="0 0 13 13"><path d="M9.6 0.8L12.2 3.4L4.4 11.2L1.8 8.6Z M1.3 9.4L3.6 11.7L0.4 12.6Z" fill="#e0dedd"/></svg>
<div class="t" style="left:996.17px;top:676.67px;font-size:12.2px;color:#3e3e3c;transform:scaleX(1.0602);transform-origin:0 0;">Date/Time Opened</div>
<div class="t" style="left:996.41px;top:696.51px;font-size:14.5px;color:#080707;transform:scaleX(1.0875);transform-origin:0 0;">24/07/2019 10:26 PM</div>
<div class="r" style="left:997px;top:717px;width:173px;height:1px;background:#dddbda"></div>
<div class="t" style="left:996.16px;top:732.67px;font-size:12.2px;color:#3e3e3c;transform:scaleX(1.0661);transform-origin:0 0;">Product</div>
<div class="r" style="left:997px;top:773px;width:173px;height:1px;background:#dddbda"></div>
<div class="t" style="left:1226.24px;top:580.67px;font-size:12.2px;color:#3e3e3c;transform:scaleX(1.0162);transform-origin:0 0;">Web Company</div>
<div class="r" style="left:1226px;top:621px;width:173px;height:1px;background:#dddbda"></div>
<svg style="left:1385px;top:601px" width="13" height="13" viewBox="0 0 13 13"><path d="M9.6 0.8L12.2 3.4L4.4 11.2L1.8 8.6Z M1.3 9.4L3.6 11.7L0.4 12.6Z" fill="#e0dedd"/></svg>
<div class="t" style="left:1226.24px;top:628.67px;font-size:12.2px;color:#3e3e3c;transform:scaleX(1.0176);transform-origin:0 0;">Web Phone</div>
<div class="r" style="left:1226px;top:669px;width:173px;height:1px;background:#dddbda"></div>
<svg style="left:1385px;top:649px" width="13" height="13" viewBox="0 0 13 13"><path d="M9.6 0.8L12.2 3.4L4.4 11.2L1.8 8.6Z M1.3 9.4L3.6 11.7L0.4 12.6Z" fill="#e0dedd"/></svg>
<div class="t" style="left:1225.28px;top:676.67px;font-size:12.2px;color:#3e3e3c;transform:scaleX(1.0482);transform-origin:0 0;">Date/Time Closed</div>
<div class="r" style="left:1226px;top:717px;width:173px;height:1px;background:#dddbda"></div>
<div class="t" style="left:1225.30px;top:732.67px;font-size:12.2px;color:#3e3e3c;transform:scaleX(1.0260);transform-origin:0 0;">Engineering Req Number</div>
<div class="r" style="left:1226px;top:773px;width:173px;height:1px;background:#dddbda"></div>
</div>
<div class="r" style="left:0px;top:78px;width:1440px;height:753px;background:rgba(10,6,8,0.48)"></div>
<div class="r" style="left:0px;top:78px;width:1440px;height:1px;background:rgba(255,255,255,0.42)"></div>
<div class="r" style="left:0px;top:78px;width:1px;height:753px;background:rgba(255,255,255,0.10)"></div>
<div class="r" style="left:1439px;top:78px;width:1px;height:753px;background:rgba(255,255,255,0.10)"></div>
<svg style="left:1124px;top:233px" width="16" height="16" viewBox="0 0 16 16"><path d="M1 1L15 15M15 1L1 15" stroke="#fff" stroke-width="2.3" stroke-linecap="round"/></svg>
<div class="r" style="left:300px;top:265px;width:840px;height:380px;background:#fff;border-radius:4px;box-shadow:0 2px 3px rgba(0,0,0,0.16)"></div>
<div class="r" style="left:300px;top:346px;width:840px;height:2px;background:#dddbda"></div>
<div class="r" style="left:300px;top:587px;width:840px;height:58px;background:#f3f1f2;border-top:2px solid #dddbda;border-radius:0 0 4px 4px"></div>
<div class="t" style="left:624.20px;top:294.18px;font-size:21px;color:#2e2e2e;transform:scaleX(0.9655);transform-origin:0 0;">Add Multiple Records</div>
<div class="t" style="left:331.64px;top:378.99px;font-size:14px;color:#2b2826;transform:scaleX(1.0483);transform-origin:0 0;">Select role for</div>
<div class="t" style="left:424.96px;top:378.99px;font-size:14px;color:#2b2826;font-weight:bold;transform:scaleX(0.9803);transform-origin:0 0;"><i>Andy Young</i></div>
<div class="t" style="left:507.70px;top:378.99px;font-size:14px;color:#2b2826;">:</div>
<div class="t" style="left:332.50px;top:427.82px;font-size:12.5px;color:#c23934;">*</div>
<div class="t" style="left:339.32px;top:431.42px;font-size:12.5px;color:#3e3e3c;font-weight:bold;transform:scaleX(0.9616);transform-origin:0 0;">Contact Role</div>
<div class="r" style="left:332px;top:456px;width:16px;height:16px;border-radius:50%;border:1px solid #1589ee;box-shadow:0 0 3px #0070d2;background:#fff"></div>
<div class="r" style="left:336px;top:460px;width:8px;height:8px;border-radius:50%;background:#1b5297"></div>
<div class="t" style="left:356.13px;top:457.90px;font-size:13.3px;color:#2b2826;transform:scaleX(1.0162);transform-origin:0 0;">Technical Contact</div>
<div class="r" style="left:332px;top:476px;width:16px;height:16px;border-radius:50%;border:1px solid #dddbda;background:#fff"></div>
<div class="t" style="left:355.34px;top:478.30px;font-size:13.3px;color:#2b2826;transform:scaleX(0.9966);transform-origin:0 0;">Business Contact</div>
<div class="r" style="left:332px;top:496px;width:16px;height:16px;border-radius:50%;border:1px solid #dddbda;background:#fff"></div>
<div class="t" style="left:355.31px;top:498.80px;font-size:13.3px;color:#2b2826;transform:scaleX(1.0224);transform-origin:0 0;">Decision Maker</div>
<div class="r" style="left:332px;top:516.8px;width:16px;height:16px;border-radius:50%;border:1px solid #dddbda;background:#fff"></div>
<div class="t" style="left:355.76px;top:518.60px;font-size:13.3px;color:#2b2826;transform:scaleX(1.0724);transform-origin:0 0;">Other</div>
<div class="r" style="left:969.4px;top:601.4px;width:84.3px;height:31.5px;background:#fff;border:1px solid #dddbda;border-radius:4px"></div>
<div class="t" style="left:985.34px;top:609.25px;font-size:13.6px;color:#1f5aa8;transform:scaleX(0.9739);transform-origin:0 0;">Previous</div>
<div class="r" style="left:1062.2px;top:601.4px;width:61.7px;height:31.5px;background:#1b5297;border-radius:4px"></div>
<div class="t" style="left:1077.86px;top:609.73px;font-size:13.1px;color:#fff;transform:scaleX(1.0850);transform-origin:0 0;">Next</div>
<div class="r" style="left:0px;top:0px;width:6px;height:6px;background:radial-gradient(circle at 100% 100%,rgba(0,0,0,0) 5px,#111 6px)"></div>
<div class="r" style="left:1434px;top:0px;width:6px;height:6px;background:radial-gradient(circle at 0 100%,rgba(0,0,0,0) 5px,#111 6px)"></div>
<div class="r" style="left:0px;top:825px;width:6px;height:6px;background:radial-gradient(circle at 100% 0,rgba(0,0,0,0) 5px,#111 6px)"></div>
<div class="r" style="left:1434px;top:825px;width:6px;height:6px;background:radial-gradient(circle at 0 0,rgba(0,0,0,0) 5px,#111 6px)"></div>
</body></html>
